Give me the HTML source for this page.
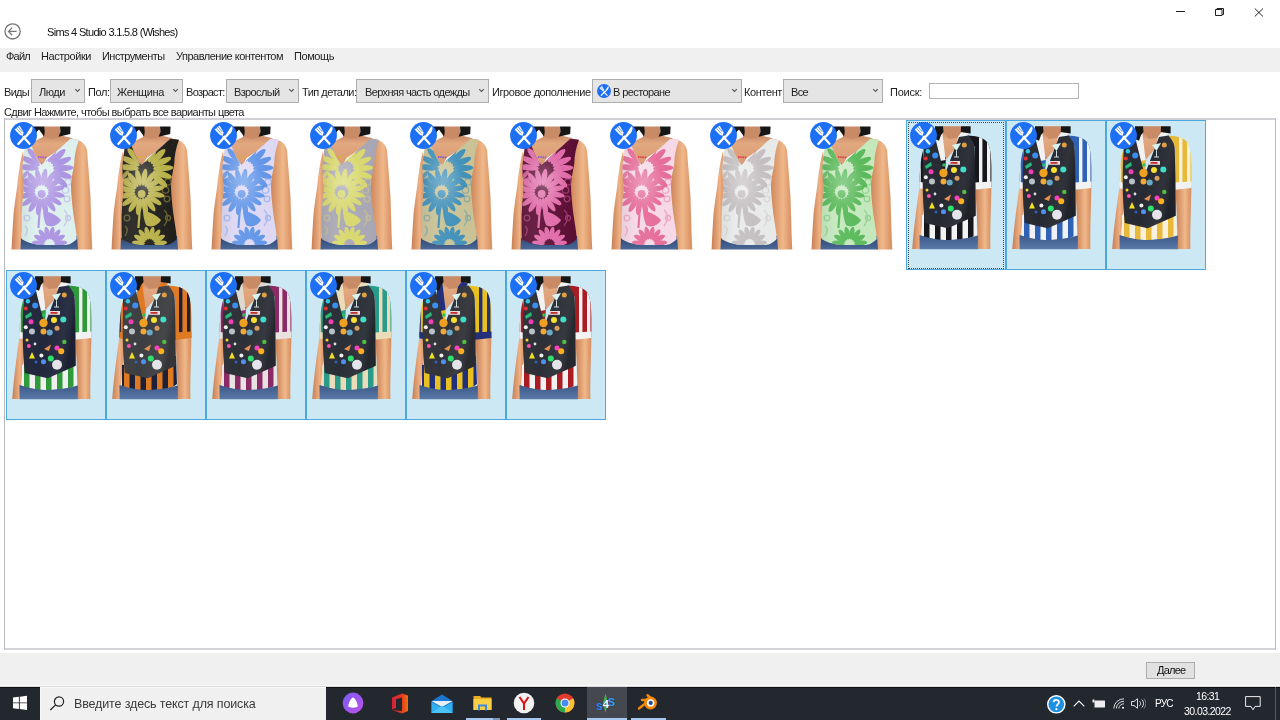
<!DOCTYPE html>
<html><head><meta charset="utf-8"><style>
html,body{margin:0;padding:0;width:1280px;height:720px;overflow:hidden;background:#fff;position:relative;font-family:"Liberation Sans",sans-serif}
.t{position:absolute;white-space:nowrap;line-height:1;will-change:transform;font-family:"Liberation Sans",sans-serif}
.cb{position:absolute;border:1px solid #adadad;background:#e5e5e5}
.chev{position:absolute}
.cell{position:absolute;width:100px;height:150px;box-sizing:border-box}
.cell.sel{background:#cce8f5;border:1px solid #4aa9e0}
.cell .th{position:absolute;left:0;top:0}
.cell.sel .th{left:-1px;top:-1px}
.ic{position:absolute;left:4px;top:2px}
.cell.sel .ic{left:3px;top:1px}
</style></head><body>
<svg width="0" height="0" style="position:absolute"><defs>
<linearGradient id="skL" x1="0" x2="1" y1="0" y2="0"><stop offset="0" stop-color="#c77f55"/><stop offset="0.55" stop-color="#eeb084"/><stop offset="1" stop-color="#d08a5e"/></linearGradient>
<linearGradient id="skR" x1="0" x2="1" y1="0" y2="0"><stop offset="0" stop-color="#c98054"/><stop offset="0.6" stop-color="#f0b88a"/><stop offset="1" stop-color="#d48c5e"/></linearGradient>
<linearGradient id="neck" x1="0" x2="0" y1="0" y2="1"><stop offset="0" stop-color="#b87858"/><stop offset="0.35" stop-color="#e2a880"/><stop offset="1" stop-color="#d89a72"/></linearGradient>
<linearGradient id="shade" x1="0" x2="1" y1="0" y2="0"><stop offset="0" stop-color="#000" stop-opacity="0.18"/><stop offset="0.3" stop-color="#fff" stop-opacity="0.08"/><stop offset="0.7" stop-color="#fff" stop-opacity="0"/><stop offset="1" stop-color="#000" stop-opacity="0.12"/></linearGradient>
<radialGradient id="hl"><stop offset="0" stop-color="#fff" stop-opacity="0.28"/><stop offset="1" stop-color="#fff" stop-opacity="0"/></radialGradient>
<linearGradient id="vsh" x1="0" x2="1" y1="0" y2="0.3"><stop offset="0" stop-color="#fff" stop-opacity="0.04"/><stop offset="0.55" stop-color="#fff" stop-opacity="0.02"/><stop offset="0.85" stop-color="#fff" stop-opacity="0.06"/><stop offset="1" stop-color="#000" stop-opacity="0.1"/></linearGradient>
<linearGradient id="jean" x1="0" x2="0" y1="0" y2="1"><stop offset="0" stop-color="#2c4470"/><stop offset="1" stop-color="#4a6898"/></linearGradient>
<linearGradient id="jean2" x1="0" x2="0" y1="0" y2="1"><stop offset="0" stop-color="#3c5888"/><stop offset="1" stop-color="#5a7aa8"/></linearGradient>
<symbol id="icon" viewBox="0 0 27 27"><circle cx="13.5" cy="13.5" r="13.4" fill="#1d6ff5"/><g fill="#fff"><path d="M8.3 22 L15 14.5" stroke="#fff" stroke-width="2.3" stroke-linecap="round"/><path d="M14.3 15.3 L21.3 4.2 C23.6 4.8 22.5 9.5 20 11.8 L16.6 15.6 Z"/><path d="M13.5 15 L19.5 21.8" stroke="#fff" stroke-width="2.2" stroke-linecap="round"/><path d="M4.6 7.6 L9.6 3.6 L13.6 10.6 L12.6 13.8 L10 13 Z"/></g><path d="M6.5 6.2 L11.2 11.5 M8.2 4.8 L12.2 9.8" stroke="#1d6ff5" stroke-width="0.7"/></symbol></defs></svg>
<svg style="position:absolute;left:4px;top:23px" width="18" height="18" viewBox="0 0 18 18"><circle cx="8.6" cy="8.4" r="7.6" fill="none" stroke="#777" stroke-width="1.3"/><path d="M4.6 8.4 H12.6 M8.2 4.6 L4.6 8.4 L8.2 12.2" fill="none" stroke="#777" stroke-width="1.3"/></svg><div class="t" style="left:47px;top:26.64px;font-size:11px;letter-spacing:-0.68px;color:#111;">Sims 4 Studio 3.1.5.8 (Wishes)</div><div style="position:absolute;left:1176px;top:11px;width:9px;height:1px;background:#222"></div><svg style="position:absolute;left:1214px;top:7px" width="11" height="10" viewBox="0 0 11 10"><path d="M1.5 2.5 H8 V8.5 H1.5 Z M3 2.5 V1.5 H9.5 V7.5 H8" fill="none" stroke="#222" stroke-width="1"/></svg><svg style="position:absolute;left:1254px;top:8px" width="10" height="9" viewBox="0 0 10 9"><path d="M0.8 0.5 L9 8.5 M9 0.5 L0.8 8.5" stroke="#222" stroke-width="1"/></svg><div style="position:absolute;left:0;top:48px;width:1280px;height:24px;background:#f0f0f0"></div><div class="t" style="left:6px;top:50.84px;font-size:11px;letter-spacing:-0.76px;color:#1e1e1e;">Файл</div><div class="t" style="left:41px;top:50.84px;font-size:11px;letter-spacing:-0.44px;color:#1e1e1e;">Настройки</div><div class="t" style="left:102px;top:50.84px;font-size:11px;letter-spacing:-0.55px;color:#1e1e1e;">Инструменты</div><div class="t" style="left:175.5px;top:50.84px;font-size:11px;letter-spacing:-0.5px;color:#1e1e1e;">Управление контентом</div><div class="t" style="left:293.5px;top:50.84px;font-size:11px;letter-spacing:-0.42px;color:#1e1e1e;">Помощь</div><div class="t" style="left:4px;top:86.84px;font-size:11px;letter-spacing:-0.7px;color:#1e1e1e;">Виды</div><div class="cb" style="left:31px;top:79px;width:52px;height:22px"></div><svg class="chev" style="left:74px;top:88px" width="7" height="5" viewBox="0 0 7 5"><path d="M1.2 1.2 L3.5 3.5 L5.8 1.2" stroke="#555" stroke-width="1.1" fill="none"/></svg><div class="t" style="left:39px;top:86.84px;font-size:11px;letter-spacing:-0.45px;color:#1e1e1e;">Люди</div><div class="t" style="left:87.5px;top:86.84px;font-size:11px;letter-spacing:-0.44px;color:#1e1e1e;">Пол:</div><div class="cb" style="left:110px;top:79px;width:71px;height:22px"></div><svg class="chev" style="left:172px;top:88px" width="7" height="5" viewBox="0 0 7 5"><path d="M1.2 1.2 L3.5 3.5 L5.8 1.2" stroke="#555" stroke-width="1.1" fill="none"/></svg><div class="t" style="left:116.5px;top:86.84px;font-size:11px;letter-spacing:-0.37px;color:#1e1e1e;">Женщина</div><div class="t" style="left:185.5px;top:86.84px;font-size:11px;letter-spacing:-0.7px;color:#1e1e1e;">Возраст:</div><div class="cb" style="left:226px;top:79px;width:71px;height:22px"></div><svg class="chev" style="left:288px;top:88px" width="7" height="5" viewBox="0 0 7 5"><path d="M1.2 1.2 L3.5 3.5 L5.8 1.2" stroke="#555" stroke-width="1.1" fill="none"/></svg><div class="t" style="left:234px;top:86.84px;font-size:11px;letter-spacing:-0.64px;color:#1e1e1e;">Взрослый</div><div class="t" style="left:301.5px;top:86.84px;font-size:11px;letter-spacing:-0.52px;color:#1e1e1e;">Тип детали:</div><div class="cb" style="left:356px;top:79px;width:131px;height:22px"></div><svg class="chev" style="left:478px;top:88px" width="7" height="5" viewBox="0 0 7 5"><path d="M1.2 1.2 L3.5 3.5 L5.8 1.2" stroke="#555" stroke-width="1.1" fill="none"/></svg><div class="t" style="left:364.5px;top:86.84px;font-size:11px;letter-spacing:-0.63px;color:#1e1e1e;">Верхняя часть одежды</div><div class="t" style="left:491.5px;top:86.84px;font-size:11px;letter-spacing:-0.44px;color:#1e1e1e;">Игровое дополнение</div><div class="cb" style="left:592px;top:79px;width:148px;height:22px"></div><svg class="chev" style="left:731px;top:88px" width="7" height="5" viewBox="0 0 7 5"><path d="M1.2 1.2 L3.5 3.5 L5.8 1.2" stroke="#555" stroke-width="1.1" fill="none"/></svg><svg style="position:absolute;left:597px;top:84px" width="14" height="14" viewBox="0 0 27 27"><use href="#icon"/></svg><div class="t" style="left:613px;top:86.84px;font-size:11px;letter-spacing:-0.6px;color:#1e1e1e;">В ресторане</div><div class="t" style="left:744px;top:86.84px;font-size:11px;letter-spacing:-0.39px;color:#1e1e1e;">Контент</div><div class="cb" style="left:783px;top:79px;width:98px;height:22px"></div><svg class="chev" style="left:872px;top:88px" width="7" height="5" viewBox="0 0 7 5"><path d="M1.2 1.2 L3.5 3.5 L5.8 1.2" stroke="#555" stroke-width="1.1" fill="none"/></svg><div class="t" style="left:791px;top:86.84px;font-size:11px;letter-spacing:-0.65px;color:#1e1e1e;">Все</div><div class="t" style="left:890px;top:86.84px;font-size:11px;letter-spacing:-0.26px;color:#1e1e1e;">Поиск:</div><div style="position:absolute;left:929px;top:83px;width:148px;height:14px;border:1px solid #b4b4b4;background:#fff"></div><div class="t" style="left:4px;top:106.84px;font-size:11px;letter-spacing:-0.58px;color:#1e1e1e;">Сдвиг Нажмите, чтобы выбрать все варианты цвета</div><div style="position:absolute;left:4px;top:118px;width:1270px;height:528px;border:1px solid #b8b8bc;border-top:2px solid #d2d2d6;border-bottom:2px solid #d4d4d8;background:#fff"></div><div class="cell" style="left:6px;top:120px"><svg class="th" width="100" height="150" viewBox="0 0 100 150">
<defs><clipPath id="c0"><path d="M18.8 27 L25.7 25.9 C28 33 31 40 35.6 45 C45 36 56 26 64.5 18.7 L73 19.8 C70 28 68.3 36 68.3 43.8 C66 55 65 62 65 67.7 C65.5 80 67 90 67.5 95 C69 105 70.5 112 70.7 119 C66 124 62 125 58 125 L34 125 C26 124 20 122 15.6 119 C15.6 110 15.6 100 15.6 95 C16 85 17 75 18 67.7 C17 60 16.4 52 16.4 47 C17 40 18 32 18.8 27 Z"/></clipPath></defs>
<path d="M17 31 C14.5 40 13 50 11.3 65.7 C9.5 78 8.2 88 7.5 94 C6.5 110 6 120 5.6 129.5 L15.5 129.5 C15.5 122 15.5 116 16 110 C18 100 20 90 20 80 C20 60 18 45 17 31 Z" fill="url(#skL)"/>
<path d="M63 18.5 C72 18.5 79 22 81 30 C82 45 83.5 60 84.4 75 C85 90 85.4 112 86.3 129.5 L70 129.5 C69 115 67 100 65 85 C64 70 65 50 63 18.5 Z" fill="url(#skR)"/>
<path d="M38 11 L54 11 L57 16 L66 18 L67 20 L40.7 38 L36 46 L23 27 L26 24 L31 20 L37 17 Z" fill="url(#neck)"/><path d="M37.9 6.6 L54.2 6.6 L54.5 12 L51 17.5 L45 19 L39.5 16.5 L38 12 Z" fill="#c98a66"/>
<path d="M27.3 6.6 L38.2 6.6 L38.8 12 L38 16.5 L33 9.5 L30.5 12 L29 21 L27.3 15 Z" fill="#171717"/><path d="M54 6.6 L64.6 6.6 L64.2 14 L59 15.2 L52.5 16.8 L54.5 12 Z" fill="#171717"/>
<path d="M15 118 L71 116 L72 129.5 L14.5 129.5 Z" fill="url(#jean)"/>
<g clip-path="url(#c0)">
<rect x="0" y="0" width="100" height="150" fill="#dcf0ee"/>
<g fill="#ab93e2" opacity="1.0"><ellipse cx="22.7" cy="47.5" rx="10.1" ry="3.1" transform="rotate(185 22.7 47.5)"/><ellipse cx="24.5" cy="41.3" rx="10.1" ry="3.1" transform="rotate(206 24.5 41.3)"/><ellipse cx="28.4" cy="36.1" rx="10.1" ry="3.1" transform="rotate(228 28.4 36.1)"/><ellipse cx="33.9" cy="32.7" rx="10.1" ry="3.1" transform="rotate(250 33.9 32.7)"/><ellipse cx="40.3" cy="31.6" rx="10.1" ry="3.1" transform="rotate(271 40.3 31.6)"/><ellipse cx="46.6" cy="33.0" rx="10.1" ry="3.1" transform="rotate(292 46.6 33.0)"/><ellipse cx="52.1" cy="36.5" rx="10.1" ry="3.1" transform="rotate(314 52.1 36.5)"/><ellipse cx="55.8" cy="41.8" rx="10.1" ry="3.1" transform="rotate(336 55.8 41.8)"/><ellipse cx="57.3" cy="48.1" rx="10.1" ry="3.1" transform="rotate(357 57.3 48.1)"/><ellipse cx="56.5" cy="54.5" rx="10.1" ry="3.1" transform="rotate(378 56.5 54.5)"/><ellipse cx="53.3" cy="60.2" rx="10.1" ry="3.1" transform="rotate(400 53.3 60.2)"/></g>
<g fill="#ab93e2" opacity="1.0"><ellipse cx="50.3" cy="74.6" rx="8.6" ry="2.8" transform="rotate(10 50.3 74.6)"/><ellipse cx="48.1" cy="80.0" rx="8.6" ry="2.8" transform="rotate(32 48.1 80.0)"/><ellipse cx="44.1" cy="84.2" rx="8.6" ry="2.8" transform="rotate(55 44.1 84.2)"/><ellipse cx="38.8" cy="86.5" rx="8.6" ry="2.8" transform="rotate(78 38.8 86.5)"/><ellipse cx="33.0" cy="86.7" rx="8.6" ry="2.8" transform="rotate(100 33.0 86.7)"/><ellipse cx="27.6" cy="84.5" rx="8.6" ry="2.8" transform="rotate(122 27.6 84.5)"/><ellipse cx="23.4" cy="80.5" rx="8.6" ry="2.8" transform="rotate(145 23.4 80.5)"/><ellipse cx="21.1" cy="75.2" rx="8.6" ry="2.8" transform="rotate(168 21.1 75.2)"/><ellipse cx="20.9" cy="69.4" rx="8.6" ry="2.8" transform="rotate(190 20.9 69.4)"/><ellipse cx="23.1" cy="64.0" rx="8.6" ry="2.8" transform="rotate(212 23.1 64.0)"/><ellipse cx="27.1" cy="59.8" rx="8.6" ry="2.8" transform="rotate(235 27.1 59.8)"/><ellipse cx="32.4" cy="57.5" rx="8.6" ry="2.8" transform="rotate(258 32.4 57.5)"/><ellipse cx="38.2" cy="57.3" rx="8.6" ry="2.8" transform="rotate(280 38.2 57.3)"/><ellipse cx="43.6" cy="59.5" rx="8.6" ry="2.8" transform="rotate(302 43.6 59.5)"/><ellipse cx="47.8" cy="63.5" rx="8.6" ry="2.8" transform="rotate(325 47.8 63.5)"/><ellipse cx="50.1" cy="68.8" rx="8.6" ry="2.8" transform="rotate(348 50.1 68.8)"/></g>
<circle cx="35.6" cy="74" r="4" fill="#ab93e2"/>
<path d="M34 87 L32.4 108" stroke="#ab93e2" stroke-width="2.2"/>
<path d="M37 90 C42 92 50 94 55 100 C52 106 44 108 40 105 C38 100 37 95 37 90Z" fill="#ab93e2"/>
<g fill="#ab93e2" opacity="1.0"><ellipse cx="32.4" cy="123.0" rx="6.5" ry="2.5" transform="rotate(185 32.4 123.0)"/><ellipse cx="33.8" cy="118.5" rx="6.5" ry="2.5" transform="rotate(209 33.8 118.5)"/><ellipse cx="36.9" cy="115.0" rx="6.5" ry="2.5" transform="rotate(234 36.9 115.0)"/><ellipse cx="41.2" cy="113.1" rx="6.5" ry="2.5" transform="rotate(258 41.2 113.1)"/><ellipse cx="45.8" cy="113.1" rx="6.5" ry="2.5" transform="rotate(282 45.8 113.1)"/><ellipse cx="50.1" cy="115.0" rx="6.5" ry="2.5" transform="rotate(306 50.1 115.0)"/><ellipse cx="53.2" cy="118.5" rx="6.5" ry="2.5" transform="rotate(331 53.2 118.5)"/><ellipse cx="54.6" cy="123.0" rx="6.5" ry="2.5" transform="rotate(355 54.6 123.0)"/></g>
<g fill="#ab93e2" opacity="0.85"><ellipse cx="19.0" cy="54.9" rx="5.4" ry="2.0" transform="rotate(-50 19.0 54.9)"/><ellipse cx="21.9" cy="59.3" rx="5.4" ry="2.0" transform="rotate(-17 21.9 59.3)"/><ellipse cx="21.9" cy="64.7" rx="5.4" ry="2.0" transform="rotate(17 21.9 64.7)"/><ellipse cx="19.0" cy="69.1" rx="5.4" ry="2.0" transform="rotate(50 19.0 69.1)"/></g>
<g fill="none" stroke="#ab93e2" stroke-width="1.3" opacity="0.45">
<circle cx="62" cy="62" r="3.2"/><circle cx="59.5" cy="70" r="3.2"/><circle cx="61" cy="79" r="2.8"/><path d="M58 90 C63 94 62 101 58 106"/><circle cx="62" cy="98" r="2.5"/><circle cx="21" cy="98" r="2.8"/><path d="M19 106 C23 109 21 113 19 116"/>
</g>
<rect x="0" y="0" width="100" height="150" fill="url(#shade)"/>
<ellipse cx="38" cy="62" rx="20" ry="30" fill="url(#hl)"/>
</g>
<path d="M32 37 L41 37.5" stroke="#a060e0" stroke-width="1.8" stroke-dasharray="1.6 0.6"/>
</svg><svg class="ic" width="27" height="27" viewBox="0 0 27 27"><use href="#icon"/></svg></div><div class="cell" style="left:106px;top:120px"><svg class="th" width="100" height="150" viewBox="0 0 100 150">
<defs><clipPath id="c1"><path d="M18.8 27 L25.7 25.9 C28 33 31 40 35.6 45 C45 36 56 26 64.5 18.7 L73 19.8 C70 28 68.3 36 68.3 43.8 C66 55 65 62 65 67.7 C65.5 80 67 90 67.5 95 C69 105 70.5 112 70.7 119 C66 124 62 125 58 125 L34 125 C26 124 20 122 15.6 119 C15.6 110 15.6 100 15.6 95 C16 85 17 75 18 67.7 C17 60 16.4 52 16.4 47 C17 40 18 32 18.8 27 Z"/></clipPath></defs>
<path d="M17 31 C14.5 40 13 50 11.3 65.7 C9.5 78 8.2 88 7.5 94 C6.5 110 6 120 5.6 129.5 L15.5 129.5 C15.5 122 15.5 116 16 110 C18 100 20 90 20 80 C20 60 18 45 17 31 Z" fill="url(#skL)"/>
<path d="M63 18.5 C72 18.5 79 22 81 30 C82 45 83.5 60 84.4 75 C85 90 85.4 112 86.3 129.5 L70 129.5 C69 115 67 100 65 85 C64 70 65 50 63 18.5 Z" fill="url(#skR)"/>
<path d="M38 11 L54 11 L57 16 L66 18 L67 20 L40.7 38 L36 46 L23 27 L26 24 L31 20 L37 17 Z" fill="url(#neck)"/><path d="M37.9 6.6 L54.2 6.6 L54.5 12 L51 17.5 L45 19 L39.5 16.5 L38 12 Z" fill="#c98a66"/>
<path d="M27.3 6.6 L38.2 6.6 L38.8 12 L38 16.5 L33 9.5 L30.5 12 L29 21 L27.3 15 Z" fill="#171717"/><path d="M54 6.6 L64.6 6.6 L64.2 14 L59 15.2 L52.5 16.8 L54.5 12 Z" fill="#171717"/>
<path d="M15 118 L71 116 L72 129.5 L14.5 129.5 Z" fill="url(#jean)"/>
<g clip-path="url(#c1)">
<rect x="0" y="0" width="100" height="150" fill="#1f1e1a"/>
<g fill="#b8b048" opacity="1.0"><ellipse cx="22.7" cy="47.5" rx="10.1" ry="3.1" transform="rotate(185 22.7 47.5)"/><ellipse cx="24.5" cy="41.3" rx="10.1" ry="3.1" transform="rotate(206 24.5 41.3)"/><ellipse cx="28.4" cy="36.1" rx="10.1" ry="3.1" transform="rotate(228 28.4 36.1)"/><ellipse cx="33.9" cy="32.7" rx="10.1" ry="3.1" transform="rotate(250 33.9 32.7)"/><ellipse cx="40.3" cy="31.6" rx="10.1" ry="3.1" transform="rotate(271 40.3 31.6)"/><ellipse cx="46.6" cy="33.0" rx="10.1" ry="3.1" transform="rotate(292 46.6 33.0)"/><ellipse cx="52.1" cy="36.5" rx="10.1" ry="3.1" transform="rotate(314 52.1 36.5)"/><ellipse cx="55.8" cy="41.8" rx="10.1" ry="3.1" transform="rotate(336 55.8 41.8)"/><ellipse cx="57.3" cy="48.1" rx="10.1" ry="3.1" transform="rotate(357 57.3 48.1)"/><ellipse cx="56.5" cy="54.5" rx="10.1" ry="3.1" transform="rotate(378 56.5 54.5)"/><ellipse cx="53.3" cy="60.2" rx="10.1" ry="3.1" transform="rotate(400 53.3 60.2)"/></g>
<g fill="#b8b048" opacity="1.0"><ellipse cx="50.3" cy="74.6" rx="8.6" ry="2.8" transform="rotate(10 50.3 74.6)"/><ellipse cx="48.1" cy="80.0" rx="8.6" ry="2.8" transform="rotate(32 48.1 80.0)"/><ellipse cx="44.1" cy="84.2" rx="8.6" ry="2.8" transform="rotate(55 44.1 84.2)"/><ellipse cx="38.8" cy="86.5" rx="8.6" ry="2.8" transform="rotate(78 38.8 86.5)"/><ellipse cx="33.0" cy="86.7" rx="8.6" ry="2.8" transform="rotate(100 33.0 86.7)"/><ellipse cx="27.6" cy="84.5" rx="8.6" ry="2.8" transform="rotate(122 27.6 84.5)"/><ellipse cx="23.4" cy="80.5" rx="8.6" ry="2.8" transform="rotate(145 23.4 80.5)"/><ellipse cx="21.1" cy="75.2" rx="8.6" ry="2.8" transform="rotate(168 21.1 75.2)"/><ellipse cx="20.9" cy="69.4" rx="8.6" ry="2.8" transform="rotate(190 20.9 69.4)"/><ellipse cx="23.1" cy="64.0" rx="8.6" ry="2.8" transform="rotate(212 23.1 64.0)"/><ellipse cx="27.1" cy="59.8" rx="8.6" ry="2.8" transform="rotate(235 27.1 59.8)"/><ellipse cx="32.4" cy="57.5" rx="8.6" ry="2.8" transform="rotate(258 32.4 57.5)"/><ellipse cx="38.2" cy="57.3" rx="8.6" ry="2.8" transform="rotate(280 38.2 57.3)"/><ellipse cx="43.6" cy="59.5" rx="8.6" ry="2.8" transform="rotate(302 43.6 59.5)"/><ellipse cx="47.8" cy="63.5" rx="8.6" ry="2.8" transform="rotate(325 47.8 63.5)"/><ellipse cx="50.1" cy="68.8" rx="8.6" ry="2.8" transform="rotate(348 50.1 68.8)"/></g>
<circle cx="35.6" cy="74" r="4" fill="#b8b048"/>
<path d="M34 87 L32.4 108" stroke="#b8b048" stroke-width="2.2"/>
<path d="M37 90 C42 92 50 94 55 100 C52 106 44 108 40 105 C38 100 37 95 37 90Z" fill="#b8b048"/>
<g fill="#b8b048" opacity="1.0"><ellipse cx="32.4" cy="123.0" rx="6.5" ry="2.5" transform="rotate(185 32.4 123.0)"/><ellipse cx="33.8" cy="118.5" rx="6.5" ry="2.5" transform="rotate(209 33.8 118.5)"/><ellipse cx="36.9" cy="115.0" rx="6.5" ry="2.5" transform="rotate(234 36.9 115.0)"/><ellipse cx="41.2" cy="113.1" rx="6.5" ry="2.5" transform="rotate(258 41.2 113.1)"/><ellipse cx="45.8" cy="113.1" rx="6.5" ry="2.5" transform="rotate(282 45.8 113.1)"/><ellipse cx="50.1" cy="115.0" rx="6.5" ry="2.5" transform="rotate(306 50.1 115.0)"/><ellipse cx="53.2" cy="118.5" rx="6.5" ry="2.5" transform="rotate(331 53.2 118.5)"/><ellipse cx="54.6" cy="123.0" rx="6.5" ry="2.5" transform="rotate(355 54.6 123.0)"/></g>
<g fill="#b8b048" opacity="0.85"><ellipse cx="19.0" cy="54.9" rx="5.4" ry="2.0" transform="rotate(-50 19.0 54.9)"/><ellipse cx="21.9" cy="59.3" rx="5.4" ry="2.0" transform="rotate(-17 21.9 59.3)"/><ellipse cx="21.9" cy="64.7" rx="5.4" ry="2.0" transform="rotate(17 21.9 64.7)"/><ellipse cx="19.0" cy="69.1" rx="5.4" ry="2.0" transform="rotate(50 19.0 69.1)"/></g>
<g fill="none" stroke="#b8b048" stroke-width="1.3" opacity="0.45">
<circle cx="62" cy="62" r="3.2"/><circle cx="59.5" cy="70" r="3.2"/><circle cx="61" cy="79" r="2.8"/><path d="M58 90 C63 94 62 101 58 106"/><circle cx="62" cy="98" r="2.5"/><circle cx="21" cy="98" r="2.8"/><path d="M19 106 C23 109 21 113 19 116"/>
</g>
<rect x="0" y="0" width="100" height="150" fill="url(#shade)"/>
<ellipse cx="38" cy="62" rx="20" ry="30" fill="url(#hl)"/>
</g>
<path d="M32 37 L41 37.5" stroke="#d8b040" stroke-width="1.8" stroke-dasharray="1.6 0.6"/>
</svg><svg class="ic" width="27" height="27" viewBox="0 0 27 27"><use href="#icon"/></svg></div><div class="cell" style="left:206px;top:120px"><svg class="th" width="100" height="150" viewBox="0 0 100 150">
<defs><clipPath id="c2"><path d="M18.8 27 L25.7 25.9 C28 33 31 40 35.6 45 C45 36 56 26 64.5 18.7 L73 19.8 C70 28 68.3 36 68.3 43.8 C66 55 65 62 65 67.7 C65.5 80 67 90 67.5 95 C69 105 70.5 112 70.7 119 C66 124 62 125 58 125 L34 125 C26 124 20 122 15.6 119 C15.6 110 15.6 100 15.6 95 C16 85 17 75 18 67.7 C17 60 16.4 52 16.4 47 C17 40 18 32 18.8 27 Z"/></clipPath></defs>
<path d="M17 31 C14.5 40 13 50 11.3 65.7 C9.5 78 8.2 88 7.5 94 C6.5 110 6 120 5.6 129.5 L15.5 129.5 C15.5 122 15.5 116 16 110 C18 100 20 90 20 80 C20 60 18 45 17 31 Z" fill="url(#skL)"/>
<path d="M63 18.5 C72 18.5 79 22 81 30 C82 45 83.5 60 84.4 75 C85 90 85.4 112 86.3 129.5 L70 129.5 C69 115 67 100 65 85 C64 70 65 50 63 18.5 Z" fill="url(#skR)"/>
<path d="M38 11 L54 11 L57 16 L66 18 L67 20 L40.7 38 L36 46 L23 27 L26 24 L31 20 L37 17 Z" fill="url(#neck)"/><path d="M37.9 6.6 L54.2 6.6 L54.5 12 L51 17.5 L45 19 L39.5 16.5 L38 12 Z" fill="#c98a66"/>
<path d="M27.3 6.6 L38.2 6.6 L38.8 12 L38 16.5 L33 9.5 L30.5 12 L29 21 L27.3 15 Z" fill="#171717"/><path d="M54 6.6 L64.6 6.6 L64.2 14 L59 15.2 L52.5 16.8 L54.5 12 Z" fill="#171717"/>
<path d="M15 118 L71 116 L72 129.5 L14.5 129.5 Z" fill="url(#jean)"/>
<g clip-path="url(#c2)">
<rect x="0" y="0" width="100" height="150" fill="#ddd8f4"/>
<g fill="#5f94e8" opacity="1.0"><ellipse cx="22.7" cy="47.5" rx="10.1" ry="3.1" transform="rotate(185 22.7 47.5)"/><ellipse cx="24.5" cy="41.3" rx="10.1" ry="3.1" transform="rotate(206 24.5 41.3)"/><ellipse cx="28.4" cy="36.1" rx="10.1" ry="3.1" transform="rotate(228 28.4 36.1)"/><ellipse cx="33.9" cy="32.7" rx="10.1" ry="3.1" transform="rotate(250 33.9 32.7)"/><ellipse cx="40.3" cy="31.6" rx="10.1" ry="3.1" transform="rotate(271 40.3 31.6)"/><ellipse cx="46.6" cy="33.0" rx="10.1" ry="3.1" transform="rotate(292 46.6 33.0)"/><ellipse cx="52.1" cy="36.5" rx="10.1" ry="3.1" transform="rotate(314 52.1 36.5)"/><ellipse cx="55.8" cy="41.8" rx="10.1" ry="3.1" transform="rotate(336 55.8 41.8)"/><ellipse cx="57.3" cy="48.1" rx="10.1" ry="3.1" transform="rotate(357 57.3 48.1)"/><ellipse cx="56.5" cy="54.5" rx="10.1" ry="3.1" transform="rotate(378 56.5 54.5)"/><ellipse cx="53.3" cy="60.2" rx="10.1" ry="3.1" transform="rotate(400 53.3 60.2)"/></g>
<g fill="#5f94e8" opacity="1.0"><ellipse cx="50.3" cy="74.6" rx="8.6" ry="2.8" transform="rotate(10 50.3 74.6)"/><ellipse cx="48.1" cy="80.0" rx="8.6" ry="2.8" transform="rotate(32 48.1 80.0)"/><ellipse cx="44.1" cy="84.2" rx="8.6" ry="2.8" transform="rotate(55 44.1 84.2)"/><ellipse cx="38.8" cy="86.5" rx="8.6" ry="2.8" transform="rotate(78 38.8 86.5)"/><ellipse cx="33.0" cy="86.7" rx="8.6" ry="2.8" transform="rotate(100 33.0 86.7)"/><ellipse cx="27.6" cy="84.5" rx="8.6" ry="2.8" transform="rotate(122 27.6 84.5)"/><ellipse cx="23.4" cy="80.5" rx="8.6" ry="2.8" transform="rotate(145 23.4 80.5)"/><ellipse cx="21.1" cy="75.2" rx="8.6" ry="2.8" transform="rotate(168 21.1 75.2)"/><ellipse cx="20.9" cy="69.4" rx="8.6" ry="2.8" transform="rotate(190 20.9 69.4)"/><ellipse cx="23.1" cy="64.0" rx="8.6" ry="2.8" transform="rotate(212 23.1 64.0)"/><ellipse cx="27.1" cy="59.8" rx="8.6" ry="2.8" transform="rotate(235 27.1 59.8)"/><ellipse cx="32.4" cy="57.5" rx="8.6" ry="2.8" transform="rotate(258 32.4 57.5)"/><ellipse cx="38.2" cy="57.3" rx="8.6" ry="2.8" transform="rotate(280 38.2 57.3)"/><ellipse cx="43.6" cy="59.5" rx="8.6" ry="2.8" transform="rotate(302 43.6 59.5)"/><ellipse cx="47.8" cy="63.5" rx="8.6" ry="2.8" transform="rotate(325 47.8 63.5)"/><ellipse cx="50.1" cy="68.8" rx="8.6" ry="2.8" transform="rotate(348 50.1 68.8)"/></g>
<circle cx="35.6" cy="74" r="4" fill="#5f94e8"/>
<path d="M34 87 L32.4 108" stroke="#5f94e8" stroke-width="2.2"/>
<path d="M37 90 C42 92 50 94 55 100 C52 106 44 108 40 105 C38 100 37 95 37 90Z" fill="#5f94e8"/>
<g fill="#5f94e8" opacity="1.0"><ellipse cx="32.4" cy="123.0" rx="6.5" ry="2.5" transform="rotate(185 32.4 123.0)"/><ellipse cx="33.8" cy="118.5" rx="6.5" ry="2.5" transform="rotate(209 33.8 118.5)"/><ellipse cx="36.9" cy="115.0" rx="6.5" ry="2.5" transform="rotate(234 36.9 115.0)"/><ellipse cx="41.2" cy="113.1" rx="6.5" ry="2.5" transform="rotate(258 41.2 113.1)"/><ellipse cx="45.8" cy="113.1" rx="6.5" ry="2.5" transform="rotate(282 45.8 113.1)"/><ellipse cx="50.1" cy="115.0" rx="6.5" ry="2.5" transform="rotate(306 50.1 115.0)"/><ellipse cx="53.2" cy="118.5" rx="6.5" ry="2.5" transform="rotate(331 53.2 118.5)"/><ellipse cx="54.6" cy="123.0" rx="6.5" ry="2.5" transform="rotate(355 54.6 123.0)"/></g>
<g fill="#5f94e8" opacity="0.85"><ellipse cx="19.0" cy="54.9" rx="5.4" ry="2.0" transform="rotate(-50 19.0 54.9)"/><ellipse cx="21.9" cy="59.3" rx="5.4" ry="2.0" transform="rotate(-17 21.9 59.3)"/><ellipse cx="21.9" cy="64.7" rx="5.4" ry="2.0" transform="rotate(17 21.9 64.7)"/><ellipse cx="19.0" cy="69.1" rx="5.4" ry="2.0" transform="rotate(50 19.0 69.1)"/></g>
<g fill="none" stroke="#5f94e8" stroke-width="1.3" opacity="0.45">
<circle cx="62" cy="62" r="3.2"/><circle cx="59.5" cy="70" r="3.2"/><circle cx="61" cy="79" r="2.8"/><path d="M58 90 C63 94 62 101 58 106"/><circle cx="62" cy="98" r="2.5"/><circle cx="21" cy="98" r="2.8"/><path d="M19 106 C23 109 21 113 19 116"/>
</g>
<rect x="0" y="0" width="100" height="150" fill="url(#shade)"/>
<ellipse cx="38" cy="62" rx="20" ry="30" fill="url(#hl)"/>
</g>
<path d="M32 37 L41 37.5" stroke="#d8b040" stroke-width="1.8" stroke-dasharray="1.6 0.6"/>
</svg><svg class="ic" width="27" height="27" viewBox="0 0 27 27"><use href="#icon"/></svg></div><div class="cell" style="left:306px;top:120px"><svg class="th" width="100" height="150" viewBox="0 0 100 150">
<defs><clipPath id="c3"><path d="M18.8 27 L25.7 25.9 C28 33 31 40 35.6 45 C45 36 56 26 64.5 18.7 L73 19.8 C70 28 68.3 36 68.3 43.8 C66 55 65 62 65 67.7 C65.5 80 67 90 67.5 95 C69 105 70.5 112 70.7 119 C66 124 62 125 58 125 L34 125 C26 124 20 122 15.6 119 C15.6 110 15.6 100 15.6 95 C16 85 17 75 18 67.7 C17 60 16.4 52 16.4 47 C17 40 18 32 18.8 27 Z"/></clipPath></defs>
<path d="M17 31 C14.5 40 13 50 11.3 65.7 C9.5 78 8.2 88 7.5 94 C6.5 110 6 120 5.6 129.5 L15.5 129.5 C15.5 122 15.5 116 16 110 C18 100 20 90 20 80 C20 60 18 45 17 31 Z" fill="url(#skL)"/>
<path d="M63 18.5 C72 18.5 79 22 81 30 C82 45 83.5 60 84.4 75 C85 90 85.4 112 86.3 129.5 L70 129.5 C69 115 67 100 65 85 C64 70 65 50 63 18.5 Z" fill="url(#skR)"/>
<path d="M38 11 L54 11 L57 16 L66 18 L67 20 L40.7 38 L36 46 L23 27 L26 24 L31 20 L37 17 Z" fill="url(#neck)"/><path d="M37.9 6.6 L54.2 6.6 L54.5 12 L51 17.5 L45 19 L39.5 16.5 L38 12 Z" fill="#c98a66"/>
<path d="M27.3 6.6 L38.2 6.6 L38.8 12 L38 16.5 L33 9.5 L30.5 12 L29 21 L27.3 15 Z" fill="#171717"/><path d="M54 6.6 L64.6 6.6 L64.2 14 L59 15.2 L52.5 16.8 L54.5 12 Z" fill="#171717"/>
<path d="M15 118 L71 116 L72 129.5 L14.5 129.5 Z" fill="url(#jean)"/>
<g clip-path="url(#c3)">
<rect x="0" y="0" width="100" height="150" fill="#a8a6b4"/>
<g fill="#d8d86c" opacity="1.0"><ellipse cx="22.7" cy="47.5" rx="10.1" ry="3.1" transform="rotate(185 22.7 47.5)"/><ellipse cx="24.5" cy="41.3" rx="10.1" ry="3.1" transform="rotate(206 24.5 41.3)"/><ellipse cx="28.4" cy="36.1" rx="10.1" ry="3.1" transform="rotate(228 28.4 36.1)"/><ellipse cx="33.9" cy="32.7" rx="10.1" ry="3.1" transform="rotate(250 33.9 32.7)"/><ellipse cx="40.3" cy="31.6" rx="10.1" ry="3.1" transform="rotate(271 40.3 31.6)"/><ellipse cx="46.6" cy="33.0" rx="10.1" ry="3.1" transform="rotate(292 46.6 33.0)"/><ellipse cx="52.1" cy="36.5" rx="10.1" ry="3.1" transform="rotate(314 52.1 36.5)"/><ellipse cx="55.8" cy="41.8" rx="10.1" ry="3.1" transform="rotate(336 55.8 41.8)"/><ellipse cx="57.3" cy="48.1" rx="10.1" ry="3.1" transform="rotate(357 57.3 48.1)"/><ellipse cx="56.5" cy="54.5" rx="10.1" ry="3.1" transform="rotate(378 56.5 54.5)"/><ellipse cx="53.3" cy="60.2" rx="10.1" ry="3.1" transform="rotate(400 53.3 60.2)"/></g>
<g fill="#d8d86c" opacity="1.0"><ellipse cx="50.3" cy="74.6" rx="8.6" ry="2.8" transform="rotate(10 50.3 74.6)"/><ellipse cx="48.1" cy="80.0" rx="8.6" ry="2.8" transform="rotate(32 48.1 80.0)"/><ellipse cx="44.1" cy="84.2" rx="8.6" ry="2.8" transform="rotate(55 44.1 84.2)"/><ellipse cx="38.8" cy="86.5" rx="8.6" ry="2.8" transform="rotate(78 38.8 86.5)"/><ellipse cx="33.0" cy="86.7" rx="8.6" ry="2.8" transform="rotate(100 33.0 86.7)"/><ellipse cx="27.6" cy="84.5" rx="8.6" ry="2.8" transform="rotate(122 27.6 84.5)"/><ellipse cx="23.4" cy="80.5" rx="8.6" ry="2.8" transform="rotate(145 23.4 80.5)"/><ellipse cx="21.1" cy="75.2" rx="8.6" ry="2.8" transform="rotate(168 21.1 75.2)"/><ellipse cx="20.9" cy="69.4" rx="8.6" ry="2.8" transform="rotate(190 20.9 69.4)"/><ellipse cx="23.1" cy="64.0" rx="8.6" ry="2.8" transform="rotate(212 23.1 64.0)"/><ellipse cx="27.1" cy="59.8" rx="8.6" ry="2.8" transform="rotate(235 27.1 59.8)"/><ellipse cx="32.4" cy="57.5" rx="8.6" ry="2.8" transform="rotate(258 32.4 57.5)"/><ellipse cx="38.2" cy="57.3" rx="8.6" ry="2.8" transform="rotate(280 38.2 57.3)"/><ellipse cx="43.6" cy="59.5" rx="8.6" ry="2.8" transform="rotate(302 43.6 59.5)"/><ellipse cx="47.8" cy="63.5" rx="8.6" ry="2.8" transform="rotate(325 47.8 63.5)"/><ellipse cx="50.1" cy="68.8" rx="8.6" ry="2.8" transform="rotate(348 50.1 68.8)"/></g>
<circle cx="35.6" cy="74" r="4" fill="#d8d86c"/>
<path d="M34 87 L32.4 108" stroke="#d8d86c" stroke-width="2.2"/>
<path d="M37 90 C42 92 50 94 55 100 C52 106 44 108 40 105 C38 100 37 95 37 90Z" fill="#d8d86c"/>
<g fill="#d8d86c" opacity="1.0"><ellipse cx="32.4" cy="123.0" rx="6.5" ry="2.5" transform="rotate(185 32.4 123.0)"/><ellipse cx="33.8" cy="118.5" rx="6.5" ry="2.5" transform="rotate(209 33.8 118.5)"/><ellipse cx="36.9" cy="115.0" rx="6.5" ry="2.5" transform="rotate(234 36.9 115.0)"/><ellipse cx="41.2" cy="113.1" rx="6.5" ry="2.5" transform="rotate(258 41.2 113.1)"/><ellipse cx="45.8" cy="113.1" rx="6.5" ry="2.5" transform="rotate(282 45.8 113.1)"/><ellipse cx="50.1" cy="115.0" rx="6.5" ry="2.5" transform="rotate(306 50.1 115.0)"/><ellipse cx="53.2" cy="118.5" rx="6.5" ry="2.5" transform="rotate(331 53.2 118.5)"/><ellipse cx="54.6" cy="123.0" rx="6.5" ry="2.5" transform="rotate(355 54.6 123.0)"/></g>
<g fill="#d8d86c" opacity="0.85"><ellipse cx="19.0" cy="54.9" rx="5.4" ry="2.0" transform="rotate(-50 19.0 54.9)"/><ellipse cx="21.9" cy="59.3" rx="5.4" ry="2.0" transform="rotate(-17 21.9 59.3)"/><ellipse cx="21.9" cy="64.7" rx="5.4" ry="2.0" transform="rotate(17 21.9 64.7)"/><ellipse cx="19.0" cy="69.1" rx="5.4" ry="2.0" transform="rotate(50 19.0 69.1)"/></g>
<g fill="none" stroke="#d8d86c" stroke-width="1.3" opacity="0.45">
<circle cx="62" cy="62" r="3.2"/><circle cx="59.5" cy="70" r="3.2"/><circle cx="61" cy="79" r="2.8"/><path d="M58 90 C63 94 62 101 58 106"/><circle cx="62" cy="98" r="2.5"/><circle cx="21" cy="98" r="2.8"/><path d="M19 106 C23 109 21 113 19 116"/>
</g>
<rect x="0" y="0" width="100" height="150" fill="url(#shade)"/>
<ellipse cx="38" cy="62" rx="20" ry="30" fill="url(#hl)"/>
</g>
<path d="M32 37 L41 37.5" stroke="#d8b040" stroke-width="1.8" stroke-dasharray="1.6 0.6"/>
</svg><svg class="ic" width="27" height="27" viewBox="0 0 27 27"><use href="#icon"/></svg></div><div class="cell" style="left:406px;top:120px"><svg class="th" width="100" height="150" viewBox="0 0 100 150">
<defs><clipPath id="c4"><path d="M18.8 27 L25.7 25.9 C28 33 31 40 35.6 45 C45 36 56 26 64.5 18.7 L73 19.8 C70 28 68.3 36 68.3 43.8 C66 55 65 62 65 67.7 C65.5 80 67 90 67.5 95 C69 105 70.5 112 70.7 119 C66 124 62 125 58 125 L34 125 C26 124 20 122 15.6 119 C15.6 110 15.6 100 15.6 95 C16 85 17 75 18 67.7 C17 60 16.4 52 16.4 47 C17 40 18 32 18.8 27 Z"/></clipPath></defs>
<path d="M17 31 C14.5 40 13 50 11.3 65.7 C9.5 78 8.2 88 7.5 94 C6.5 110 6 120 5.6 129.5 L15.5 129.5 C15.5 122 15.5 116 16 110 C18 100 20 90 20 80 C20 60 18 45 17 31 Z" fill="url(#skL)"/>
<path d="M63 18.5 C72 18.5 79 22 81 30 C82 45 83.5 60 84.4 75 C85 90 85.4 112 86.3 129.5 L70 129.5 C69 115 67 100 65 85 C64 70 65 50 63 18.5 Z" fill="url(#skR)"/>
<path d="M38 11 L54 11 L57 16 L66 18 L67 20 L40.7 38 L36 46 L23 27 L26 24 L31 20 L37 17 Z" fill="url(#neck)"/><path d="M37.9 6.6 L54.2 6.6 L54.5 12 L51 17.5 L45 19 L39.5 16.5 L38 12 Z" fill="#c98a66"/>
<path d="M27.3 6.6 L38.2 6.6 L38.8 12 L38 16.5 L33 9.5 L30.5 12 L29 21 L27.3 15 Z" fill="#171717"/><path d="M54 6.6 L64.6 6.6 L64.2 14 L59 15.2 L52.5 16.8 L54.5 12 Z" fill="#171717"/>
<path d="M15 118 L71 116 L72 129.5 L14.5 129.5 Z" fill="url(#jean)"/>
<g clip-path="url(#c4)">
<rect x="0" y="0" width="100" height="150" fill="#c9c294"/>
<g fill="#3f8fb8" opacity="1.0"><ellipse cx="22.7" cy="47.5" rx="10.1" ry="3.1" transform="rotate(185 22.7 47.5)"/><ellipse cx="24.5" cy="41.3" rx="10.1" ry="3.1" transform="rotate(206 24.5 41.3)"/><ellipse cx="28.4" cy="36.1" rx="10.1" ry="3.1" transform="rotate(228 28.4 36.1)"/><ellipse cx="33.9" cy="32.7" rx="10.1" ry="3.1" transform="rotate(250 33.9 32.7)"/><ellipse cx="40.3" cy="31.6" rx="10.1" ry="3.1" transform="rotate(271 40.3 31.6)"/><ellipse cx="46.6" cy="33.0" rx="10.1" ry="3.1" transform="rotate(292 46.6 33.0)"/><ellipse cx="52.1" cy="36.5" rx="10.1" ry="3.1" transform="rotate(314 52.1 36.5)"/><ellipse cx="55.8" cy="41.8" rx="10.1" ry="3.1" transform="rotate(336 55.8 41.8)"/><ellipse cx="57.3" cy="48.1" rx="10.1" ry="3.1" transform="rotate(357 57.3 48.1)"/><ellipse cx="56.5" cy="54.5" rx="10.1" ry="3.1" transform="rotate(378 56.5 54.5)"/><ellipse cx="53.3" cy="60.2" rx="10.1" ry="3.1" transform="rotate(400 53.3 60.2)"/></g>
<g fill="#3f8fb8" opacity="1.0"><ellipse cx="50.3" cy="74.6" rx="8.6" ry="2.8" transform="rotate(10 50.3 74.6)"/><ellipse cx="48.1" cy="80.0" rx="8.6" ry="2.8" transform="rotate(32 48.1 80.0)"/><ellipse cx="44.1" cy="84.2" rx="8.6" ry="2.8" transform="rotate(55 44.1 84.2)"/><ellipse cx="38.8" cy="86.5" rx="8.6" ry="2.8" transform="rotate(78 38.8 86.5)"/><ellipse cx="33.0" cy="86.7" rx="8.6" ry="2.8" transform="rotate(100 33.0 86.7)"/><ellipse cx="27.6" cy="84.5" rx="8.6" ry="2.8" transform="rotate(122 27.6 84.5)"/><ellipse cx="23.4" cy="80.5" rx="8.6" ry="2.8" transform="rotate(145 23.4 80.5)"/><ellipse cx="21.1" cy="75.2" rx="8.6" ry="2.8" transform="rotate(168 21.1 75.2)"/><ellipse cx="20.9" cy="69.4" rx="8.6" ry="2.8" transform="rotate(190 20.9 69.4)"/><ellipse cx="23.1" cy="64.0" rx="8.6" ry="2.8" transform="rotate(212 23.1 64.0)"/><ellipse cx="27.1" cy="59.8" rx="8.6" ry="2.8" transform="rotate(235 27.1 59.8)"/><ellipse cx="32.4" cy="57.5" rx="8.6" ry="2.8" transform="rotate(258 32.4 57.5)"/><ellipse cx="38.2" cy="57.3" rx="8.6" ry="2.8" transform="rotate(280 38.2 57.3)"/><ellipse cx="43.6" cy="59.5" rx="8.6" ry="2.8" transform="rotate(302 43.6 59.5)"/><ellipse cx="47.8" cy="63.5" rx="8.6" ry="2.8" transform="rotate(325 47.8 63.5)"/><ellipse cx="50.1" cy="68.8" rx="8.6" ry="2.8" transform="rotate(348 50.1 68.8)"/></g>
<circle cx="35.6" cy="74" r="4" fill="#3f8fb8"/>
<path d="M34 87 L32.4 108" stroke="#3f8fb8" stroke-width="2.2"/>
<path d="M37 90 C42 92 50 94 55 100 C52 106 44 108 40 105 C38 100 37 95 37 90Z" fill="#3f8fb8"/>
<g fill="#3f8fb8" opacity="1.0"><ellipse cx="32.4" cy="123.0" rx="6.5" ry="2.5" transform="rotate(185 32.4 123.0)"/><ellipse cx="33.8" cy="118.5" rx="6.5" ry="2.5" transform="rotate(209 33.8 118.5)"/><ellipse cx="36.9" cy="115.0" rx="6.5" ry="2.5" transform="rotate(234 36.9 115.0)"/><ellipse cx="41.2" cy="113.1" rx="6.5" ry="2.5" transform="rotate(258 41.2 113.1)"/><ellipse cx="45.8" cy="113.1" rx="6.5" ry="2.5" transform="rotate(282 45.8 113.1)"/><ellipse cx="50.1" cy="115.0" rx="6.5" ry="2.5" transform="rotate(306 50.1 115.0)"/><ellipse cx="53.2" cy="118.5" rx="6.5" ry="2.5" transform="rotate(331 53.2 118.5)"/><ellipse cx="54.6" cy="123.0" rx="6.5" ry="2.5" transform="rotate(355 54.6 123.0)"/></g>
<g fill="#3f8fb8" opacity="0.85"><ellipse cx="19.0" cy="54.9" rx="5.4" ry="2.0" transform="rotate(-50 19.0 54.9)"/><ellipse cx="21.9" cy="59.3" rx="5.4" ry="2.0" transform="rotate(-17 21.9 59.3)"/><ellipse cx="21.9" cy="64.7" rx="5.4" ry="2.0" transform="rotate(17 21.9 64.7)"/><ellipse cx="19.0" cy="69.1" rx="5.4" ry="2.0" transform="rotate(50 19.0 69.1)"/></g>
<g fill="none" stroke="#3f8fb8" stroke-width="1.3" opacity="0.45">
<circle cx="62" cy="62" r="3.2"/><circle cx="59.5" cy="70" r="3.2"/><circle cx="61" cy="79" r="2.8"/><path d="M58 90 C63 94 62 101 58 106"/><circle cx="62" cy="98" r="2.5"/><circle cx="21" cy="98" r="2.8"/><path d="M19 106 C23 109 21 113 19 116"/>
</g>
<rect x="0" y="0" width="100" height="150" fill="url(#shade)"/>
<ellipse cx="38" cy="62" rx="20" ry="30" fill="url(#hl)"/>
</g>
<path d="M32 37 L41 37.5" stroke="#8060d0" stroke-width="1.8" stroke-dasharray="1.6 0.6"/>
</svg><svg class="ic" width="27" height="27" viewBox="0 0 27 27"><use href="#icon"/></svg></div><div class="cell" style="left:506px;top:120px"><svg class="th" width="100" height="150" viewBox="0 0 100 150">
<defs><clipPath id="c5"><path d="M18.8 27 L25.7 25.9 C28 33 31 40 35.6 45 C45 36 56 26 64.5 18.7 L73 19.8 C70 28 68.3 36 68.3 43.8 C66 55 65 62 65 67.7 C65.5 80 67 90 67.5 95 C69 105 70.5 112 70.7 119 C66 124 62 125 58 125 L34 125 C26 124 20 122 15.6 119 C15.6 110 15.6 100 15.6 95 C16 85 17 75 18 67.7 C17 60 16.4 52 16.4 47 C17 40 18 32 18.8 27 Z"/></clipPath></defs>
<path d="M17 31 C14.5 40 13 50 11.3 65.7 C9.5 78 8.2 88 7.5 94 C6.5 110 6 120 5.6 129.5 L15.5 129.5 C15.5 122 15.5 116 16 110 C18 100 20 90 20 80 C20 60 18 45 17 31 Z" fill="url(#skL)"/>
<path d="M63 18.5 C72 18.5 79 22 81 30 C82 45 83.5 60 84.4 75 C85 90 85.4 112 86.3 129.5 L70 129.5 C69 115 67 100 65 85 C64 70 65 50 63 18.5 Z" fill="url(#skR)"/>
<path d="M38 11 L54 11 L57 16 L66 18 L67 20 L40.7 38 L36 46 L23 27 L26 24 L31 20 L37 17 Z" fill="url(#neck)"/><path d="M37.9 6.6 L54.2 6.6 L54.5 12 L51 17.5 L45 19 L39.5 16.5 L38 12 Z" fill="#c98a66"/>
<path d="M27.3 6.6 L38.2 6.6 L38.8 12 L38 16.5 L33 9.5 L30.5 12 L29 21 L27.3 15 Z" fill="#171717"/><path d="M54 6.6 L64.6 6.6 L64.2 14 L59 15.2 L52.5 16.8 L54.5 12 Z" fill="#171717"/>
<path d="M15 118 L71 116 L72 129.5 L14.5 129.5 Z" fill="url(#jean)"/>
<g clip-path="url(#c5)">
<rect x="0" y="0" width="100" height="150" fill="#5c0d34"/>
<g fill="#e06aa8" opacity="1.0"><ellipse cx="22.7" cy="47.5" rx="10.1" ry="3.1" transform="rotate(185 22.7 47.5)"/><ellipse cx="24.5" cy="41.3" rx="10.1" ry="3.1" transform="rotate(206 24.5 41.3)"/><ellipse cx="28.4" cy="36.1" rx="10.1" ry="3.1" transform="rotate(228 28.4 36.1)"/><ellipse cx="33.9" cy="32.7" rx="10.1" ry="3.1" transform="rotate(250 33.9 32.7)"/><ellipse cx="40.3" cy="31.6" rx="10.1" ry="3.1" transform="rotate(271 40.3 31.6)"/><ellipse cx="46.6" cy="33.0" rx="10.1" ry="3.1" transform="rotate(292 46.6 33.0)"/><ellipse cx="52.1" cy="36.5" rx="10.1" ry="3.1" transform="rotate(314 52.1 36.5)"/><ellipse cx="55.8" cy="41.8" rx="10.1" ry="3.1" transform="rotate(336 55.8 41.8)"/><ellipse cx="57.3" cy="48.1" rx="10.1" ry="3.1" transform="rotate(357 57.3 48.1)"/><ellipse cx="56.5" cy="54.5" rx="10.1" ry="3.1" transform="rotate(378 56.5 54.5)"/><ellipse cx="53.3" cy="60.2" rx="10.1" ry="3.1" transform="rotate(400 53.3 60.2)"/></g>
<g fill="#e06aa8" opacity="1.0"><ellipse cx="50.3" cy="74.6" rx="8.6" ry="2.8" transform="rotate(10 50.3 74.6)"/><ellipse cx="48.1" cy="80.0" rx="8.6" ry="2.8" transform="rotate(32 48.1 80.0)"/><ellipse cx="44.1" cy="84.2" rx="8.6" ry="2.8" transform="rotate(55 44.1 84.2)"/><ellipse cx="38.8" cy="86.5" rx="8.6" ry="2.8" transform="rotate(78 38.8 86.5)"/><ellipse cx="33.0" cy="86.7" rx="8.6" ry="2.8" transform="rotate(100 33.0 86.7)"/><ellipse cx="27.6" cy="84.5" rx="8.6" ry="2.8" transform="rotate(122 27.6 84.5)"/><ellipse cx="23.4" cy="80.5" rx="8.6" ry="2.8" transform="rotate(145 23.4 80.5)"/><ellipse cx="21.1" cy="75.2" rx="8.6" ry="2.8" transform="rotate(168 21.1 75.2)"/><ellipse cx="20.9" cy="69.4" rx="8.6" ry="2.8" transform="rotate(190 20.9 69.4)"/><ellipse cx="23.1" cy="64.0" rx="8.6" ry="2.8" transform="rotate(212 23.1 64.0)"/><ellipse cx="27.1" cy="59.8" rx="8.6" ry="2.8" transform="rotate(235 27.1 59.8)"/><ellipse cx="32.4" cy="57.5" rx="8.6" ry="2.8" transform="rotate(258 32.4 57.5)"/><ellipse cx="38.2" cy="57.3" rx="8.6" ry="2.8" transform="rotate(280 38.2 57.3)"/><ellipse cx="43.6" cy="59.5" rx="8.6" ry="2.8" transform="rotate(302 43.6 59.5)"/><ellipse cx="47.8" cy="63.5" rx="8.6" ry="2.8" transform="rotate(325 47.8 63.5)"/><ellipse cx="50.1" cy="68.8" rx="8.6" ry="2.8" transform="rotate(348 50.1 68.8)"/></g>
<circle cx="35.6" cy="74" r="4" fill="#e06aa8"/>
<path d="M34 87 L32.4 108" stroke="#e06aa8" stroke-width="2.2"/>
<path d="M37 90 C42 92 50 94 55 100 C52 106 44 108 40 105 C38 100 37 95 37 90Z" fill="#e06aa8"/>
<g fill="#e06aa8" opacity="1.0"><ellipse cx="32.4" cy="123.0" rx="6.5" ry="2.5" transform="rotate(185 32.4 123.0)"/><ellipse cx="33.8" cy="118.5" rx="6.5" ry="2.5" transform="rotate(209 33.8 118.5)"/><ellipse cx="36.9" cy="115.0" rx="6.5" ry="2.5" transform="rotate(234 36.9 115.0)"/><ellipse cx="41.2" cy="113.1" rx="6.5" ry="2.5" transform="rotate(258 41.2 113.1)"/><ellipse cx="45.8" cy="113.1" rx="6.5" ry="2.5" transform="rotate(282 45.8 113.1)"/><ellipse cx="50.1" cy="115.0" rx="6.5" ry="2.5" transform="rotate(306 50.1 115.0)"/><ellipse cx="53.2" cy="118.5" rx="6.5" ry="2.5" transform="rotate(331 53.2 118.5)"/><ellipse cx="54.6" cy="123.0" rx="6.5" ry="2.5" transform="rotate(355 54.6 123.0)"/></g>
<g fill="#e06aa8" opacity="0.85"><ellipse cx="19.0" cy="54.9" rx="5.4" ry="2.0" transform="rotate(-50 19.0 54.9)"/><ellipse cx="21.9" cy="59.3" rx="5.4" ry="2.0" transform="rotate(-17 21.9 59.3)"/><ellipse cx="21.9" cy="64.7" rx="5.4" ry="2.0" transform="rotate(17 21.9 64.7)"/><ellipse cx="19.0" cy="69.1" rx="5.4" ry="2.0" transform="rotate(50 19.0 69.1)"/></g>
<g fill="none" stroke="#e06aa8" stroke-width="1.3" opacity="0.45">
<circle cx="62" cy="62" r="3.2"/><circle cx="59.5" cy="70" r="3.2"/><circle cx="61" cy="79" r="2.8"/><path d="M58 90 C63 94 62 101 58 106"/><circle cx="62" cy="98" r="2.5"/><circle cx="21" cy="98" r="2.8"/><path d="M19 106 C23 109 21 113 19 116"/>
</g>
<rect x="0" y="0" width="100" height="150" fill="url(#shade)"/>
<ellipse cx="38" cy="62" rx="20" ry="30" fill="url(#hl)"/>
</g>
<path d="M32 37 L41 37.5" stroke="#9060d0" stroke-width="1.8" stroke-dasharray="1.6 0.6"/>
</svg><svg class="ic" width="27" height="27" viewBox="0 0 27 27"><use href="#icon"/></svg></div><div class="cell" style="left:606px;top:120px"><svg class="th" width="100" height="150" viewBox="0 0 100 150">
<defs><clipPath id="c6"><path d="M18.8 27 L25.7 25.9 C28 33 31 40 35.6 45 C45 36 56 26 64.5 18.7 L73 19.8 C70 28 68.3 36 68.3 43.8 C66 55 65 62 65 67.7 C65.5 80 67 90 67.5 95 C69 105 70.5 112 70.7 119 C66 124 62 125 58 125 L34 125 C26 124 20 122 15.6 119 C15.6 110 15.6 100 15.6 95 C16 85 17 75 18 67.7 C17 60 16.4 52 16.4 47 C17 40 18 32 18.8 27 Z"/></clipPath></defs>
<path d="M17 31 C14.5 40 13 50 11.3 65.7 C9.5 78 8.2 88 7.5 94 C6.5 110 6 120 5.6 129.5 L15.5 129.5 C15.5 122 15.5 116 16 110 C18 100 20 90 20 80 C20 60 18 45 17 31 Z" fill="url(#skL)"/>
<path d="M63 18.5 C72 18.5 79 22 81 30 C82 45 83.5 60 84.4 75 C85 90 85.4 112 86.3 129.5 L70 129.5 C69 115 67 100 65 85 C64 70 65 50 63 18.5 Z" fill="url(#skR)"/>
<path d="M38 11 L54 11 L57 16 L66 18 L67 20 L40.7 38 L36 46 L23 27 L26 24 L31 20 L37 17 Z" fill="url(#neck)"/><path d="M37.9 6.6 L54.2 6.6 L54.5 12 L51 17.5 L45 19 L39.5 16.5 L38 12 Z" fill="#c98a66"/>
<path d="M27.3 6.6 L38.2 6.6 L38.8 12 L38 16.5 L33 9.5 L30.5 12 L29 21 L27.3 15 Z" fill="#171717"/><path d="M54 6.6 L64.6 6.6 L64.2 14 L59 15.2 L52.5 16.8 L54.5 12 Z" fill="#171717"/>
<path d="M15 118 L71 116 L72 129.5 L14.5 129.5 Z" fill="url(#jean)"/>
<g clip-path="url(#c6)">
<rect x="0" y="0" width="100" height="150" fill="#f6d8e6"/>
<g fill="#e56a98" opacity="1.0"><ellipse cx="22.7" cy="47.5" rx="10.1" ry="3.1" transform="rotate(185 22.7 47.5)"/><ellipse cx="24.5" cy="41.3" rx="10.1" ry="3.1" transform="rotate(206 24.5 41.3)"/><ellipse cx="28.4" cy="36.1" rx="10.1" ry="3.1" transform="rotate(228 28.4 36.1)"/><ellipse cx="33.9" cy="32.7" rx="10.1" ry="3.1" transform="rotate(250 33.9 32.7)"/><ellipse cx="40.3" cy="31.6" rx="10.1" ry="3.1" transform="rotate(271 40.3 31.6)"/><ellipse cx="46.6" cy="33.0" rx="10.1" ry="3.1" transform="rotate(292 46.6 33.0)"/><ellipse cx="52.1" cy="36.5" rx="10.1" ry="3.1" transform="rotate(314 52.1 36.5)"/><ellipse cx="55.8" cy="41.8" rx="10.1" ry="3.1" transform="rotate(336 55.8 41.8)"/><ellipse cx="57.3" cy="48.1" rx="10.1" ry="3.1" transform="rotate(357 57.3 48.1)"/><ellipse cx="56.5" cy="54.5" rx="10.1" ry="3.1" transform="rotate(378 56.5 54.5)"/><ellipse cx="53.3" cy="60.2" rx="10.1" ry="3.1" transform="rotate(400 53.3 60.2)"/></g>
<g fill="#e56a98" opacity="1.0"><ellipse cx="50.3" cy="74.6" rx="8.6" ry="2.8" transform="rotate(10 50.3 74.6)"/><ellipse cx="48.1" cy="80.0" rx="8.6" ry="2.8" transform="rotate(32 48.1 80.0)"/><ellipse cx="44.1" cy="84.2" rx="8.6" ry="2.8" transform="rotate(55 44.1 84.2)"/><ellipse cx="38.8" cy="86.5" rx="8.6" ry="2.8" transform="rotate(78 38.8 86.5)"/><ellipse cx="33.0" cy="86.7" rx="8.6" ry="2.8" transform="rotate(100 33.0 86.7)"/><ellipse cx="27.6" cy="84.5" rx="8.6" ry="2.8" transform="rotate(122 27.6 84.5)"/><ellipse cx="23.4" cy="80.5" rx="8.6" ry="2.8" transform="rotate(145 23.4 80.5)"/><ellipse cx="21.1" cy="75.2" rx="8.6" ry="2.8" transform="rotate(168 21.1 75.2)"/><ellipse cx="20.9" cy="69.4" rx="8.6" ry="2.8" transform="rotate(190 20.9 69.4)"/><ellipse cx="23.1" cy="64.0" rx="8.6" ry="2.8" transform="rotate(212 23.1 64.0)"/><ellipse cx="27.1" cy="59.8" rx="8.6" ry="2.8" transform="rotate(235 27.1 59.8)"/><ellipse cx="32.4" cy="57.5" rx="8.6" ry="2.8" transform="rotate(258 32.4 57.5)"/><ellipse cx="38.2" cy="57.3" rx="8.6" ry="2.8" transform="rotate(280 38.2 57.3)"/><ellipse cx="43.6" cy="59.5" rx="8.6" ry="2.8" transform="rotate(302 43.6 59.5)"/><ellipse cx="47.8" cy="63.5" rx="8.6" ry="2.8" transform="rotate(325 47.8 63.5)"/><ellipse cx="50.1" cy="68.8" rx="8.6" ry="2.8" transform="rotate(348 50.1 68.8)"/></g>
<circle cx="35.6" cy="74" r="4" fill="#e56a98"/>
<path d="M34 87 L32.4 108" stroke="#e56a98" stroke-width="2.2"/>
<path d="M37 90 C42 92 50 94 55 100 C52 106 44 108 40 105 C38 100 37 95 37 90Z" fill="#e56a98"/>
<g fill="#e56a98" opacity="1.0"><ellipse cx="32.4" cy="123.0" rx="6.5" ry="2.5" transform="rotate(185 32.4 123.0)"/><ellipse cx="33.8" cy="118.5" rx="6.5" ry="2.5" transform="rotate(209 33.8 118.5)"/><ellipse cx="36.9" cy="115.0" rx="6.5" ry="2.5" transform="rotate(234 36.9 115.0)"/><ellipse cx="41.2" cy="113.1" rx="6.5" ry="2.5" transform="rotate(258 41.2 113.1)"/><ellipse cx="45.8" cy="113.1" rx="6.5" ry="2.5" transform="rotate(282 45.8 113.1)"/><ellipse cx="50.1" cy="115.0" rx="6.5" ry="2.5" transform="rotate(306 50.1 115.0)"/><ellipse cx="53.2" cy="118.5" rx="6.5" ry="2.5" transform="rotate(331 53.2 118.5)"/><ellipse cx="54.6" cy="123.0" rx="6.5" ry="2.5" transform="rotate(355 54.6 123.0)"/></g>
<g fill="#e56a98" opacity="0.85"><ellipse cx="19.0" cy="54.9" rx="5.4" ry="2.0" transform="rotate(-50 19.0 54.9)"/><ellipse cx="21.9" cy="59.3" rx="5.4" ry="2.0" transform="rotate(-17 21.9 59.3)"/><ellipse cx="21.9" cy="64.7" rx="5.4" ry="2.0" transform="rotate(17 21.9 64.7)"/><ellipse cx="19.0" cy="69.1" rx="5.4" ry="2.0" transform="rotate(50 19.0 69.1)"/></g>
<g fill="none" stroke="#e56a98" stroke-width="1.3" opacity="0.45">
<circle cx="62" cy="62" r="3.2"/><circle cx="59.5" cy="70" r="3.2"/><circle cx="61" cy="79" r="2.8"/><path d="M58 90 C63 94 62 101 58 106"/><circle cx="62" cy="98" r="2.5"/><circle cx="21" cy="98" r="2.8"/><path d="M19 106 C23 109 21 113 19 116"/>
</g>
<rect x="0" y="0" width="100" height="150" fill="url(#shade)"/>
<ellipse cx="38" cy="62" rx="20" ry="30" fill="url(#hl)"/>
</g>
<path d="M32 37 L41 37.5" stroke="#e04050" stroke-width="1.8" stroke-dasharray="1.6 0.6"/>
</svg><svg class="ic" width="27" height="27" viewBox="0 0 27 27"><use href="#icon"/></svg></div><div class="cell" style="left:706px;top:120px"><svg class="th" width="100" height="150" viewBox="0 0 100 150">
<defs><clipPath id="c7"><path d="M18.8 27 L25.7 25.9 C28 33 31 40 35.6 45 C45 36 56 26 64.5 18.7 L73 19.8 C70 28 68.3 36 68.3 43.8 C66 55 65 62 65 67.7 C65.5 80 67 90 67.5 95 C69 105 70.5 112 70.7 119 C66 124 62 125 58 125 L34 125 C26 124 20 122 15.6 119 C15.6 110 15.6 100 15.6 95 C16 85 17 75 18 67.7 C17 60 16.4 52 16.4 47 C17 40 18 32 18.8 27 Z"/></clipPath></defs>
<path d="M17 31 C14.5 40 13 50 11.3 65.7 C9.5 78 8.2 88 7.5 94 C6.5 110 6 120 5.6 129.5 L15.5 129.5 C15.5 122 15.5 116 16 110 C18 100 20 90 20 80 C20 60 18 45 17 31 Z" fill="url(#skL)"/>
<path d="M63 18.5 C72 18.5 79 22 81 30 C82 45 83.5 60 84.4 75 C85 90 85.4 112 86.3 129.5 L70 129.5 C69 115 67 100 65 85 C64 70 65 50 63 18.5 Z" fill="url(#skR)"/>
<path d="M38 11 L54 11 L57 16 L66 18 L67 20 L40.7 38 L36 46 L23 27 L26 24 L31 20 L37 17 Z" fill="url(#neck)"/><path d="M37.9 6.6 L54.2 6.6 L54.5 12 L51 17.5 L45 19 L39.5 16.5 L38 12 Z" fill="#c98a66"/>
<path d="M27.3 6.6 L38.2 6.6 L38.8 12 L38 16.5 L33 9.5 L30.5 12 L29 21 L27.3 15 Z" fill="#171717"/><path d="M54 6.6 L64.6 6.6 L64.2 14 L59 15.2 L52.5 16.8 L54.5 12 Z" fill="#171717"/>
<path d="M15 118 L71 116 L72 129.5 L14.5 129.5 Z" fill="url(#jean)"/>
<g clip-path="url(#c7)">
<rect x="0" y="0" width="100" height="150" fill="#e8eaea"/>
<g fill="#c4bec0" opacity="1.0"><ellipse cx="22.7" cy="47.5" rx="10.1" ry="3.1" transform="rotate(185 22.7 47.5)"/><ellipse cx="24.5" cy="41.3" rx="10.1" ry="3.1" transform="rotate(206 24.5 41.3)"/><ellipse cx="28.4" cy="36.1" rx="10.1" ry="3.1" transform="rotate(228 28.4 36.1)"/><ellipse cx="33.9" cy="32.7" rx="10.1" ry="3.1" transform="rotate(250 33.9 32.7)"/><ellipse cx="40.3" cy="31.6" rx="10.1" ry="3.1" transform="rotate(271 40.3 31.6)"/><ellipse cx="46.6" cy="33.0" rx="10.1" ry="3.1" transform="rotate(292 46.6 33.0)"/><ellipse cx="52.1" cy="36.5" rx="10.1" ry="3.1" transform="rotate(314 52.1 36.5)"/><ellipse cx="55.8" cy="41.8" rx="10.1" ry="3.1" transform="rotate(336 55.8 41.8)"/><ellipse cx="57.3" cy="48.1" rx="10.1" ry="3.1" transform="rotate(357 57.3 48.1)"/><ellipse cx="56.5" cy="54.5" rx="10.1" ry="3.1" transform="rotate(378 56.5 54.5)"/><ellipse cx="53.3" cy="60.2" rx="10.1" ry="3.1" transform="rotate(400 53.3 60.2)"/></g>
<g fill="#c4bec0" opacity="1.0"><ellipse cx="50.3" cy="74.6" rx="8.6" ry="2.8" transform="rotate(10 50.3 74.6)"/><ellipse cx="48.1" cy="80.0" rx="8.6" ry="2.8" transform="rotate(32 48.1 80.0)"/><ellipse cx="44.1" cy="84.2" rx="8.6" ry="2.8" transform="rotate(55 44.1 84.2)"/><ellipse cx="38.8" cy="86.5" rx="8.6" ry="2.8" transform="rotate(78 38.8 86.5)"/><ellipse cx="33.0" cy="86.7" rx="8.6" ry="2.8" transform="rotate(100 33.0 86.7)"/><ellipse cx="27.6" cy="84.5" rx="8.6" ry="2.8" transform="rotate(122 27.6 84.5)"/><ellipse cx="23.4" cy="80.5" rx="8.6" ry="2.8" transform="rotate(145 23.4 80.5)"/><ellipse cx="21.1" cy="75.2" rx="8.6" ry="2.8" transform="rotate(168 21.1 75.2)"/><ellipse cx="20.9" cy="69.4" rx="8.6" ry="2.8" transform="rotate(190 20.9 69.4)"/><ellipse cx="23.1" cy="64.0" rx="8.6" ry="2.8" transform="rotate(212 23.1 64.0)"/><ellipse cx="27.1" cy="59.8" rx="8.6" ry="2.8" transform="rotate(235 27.1 59.8)"/><ellipse cx="32.4" cy="57.5" rx="8.6" ry="2.8" transform="rotate(258 32.4 57.5)"/><ellipse cx="38.2" cy="57.3" rx="8.6" ry="2.8" transform="rotate(280 38.2 57.3)"/><ellipse cx="43.6" cy="59.5" rx="8.6" ry="2.8" transform="rotate(302 43.6 59.5)"/><ellipse cx="47.8" cy="63.5" rx="8.6" ry="2.8" transform="rotate(325 47.8 63.5)"/><ellipse cx="50.1" cy="68.8" rx="8.6" ry="2.8" transform="rotate(348 50.1 68.8)"/></g>
<circle cx="35.6" cy="74" r="4" fill="#c4bec0"/>
<path d="M34 87 L32.4 108" stroke="#c4bec0" stroke-width="2.2"/>
<path d="M37 90 C42 92 50 94 55 100 C52 106 44 108 40 105 C38 100 37 95 37 90Z" fill="#c4bec0"/>
<g fill="#c4bec0" opacity="1.0"><ellipse cx="32.4" cy="123.0" rx="6.5" ry="2.5" transform="rotate(185 32.4 123.0)"/><ellipse cx="33.8" cy="118.5" rx="6.5" ry="2.5" transform="rotate(209 33.8 118.5)"/><ellipse cx="36.9" cy="115.0" rx="6.5" ry="2.5" transform="rotate(234 36.9 115.0)"/><ellipse cx="41.2" cy="113.1" rx="6.5" ry="2.5" transform="rotate(258 41.2 113.1)"/><ellipse cx="45.8" cy="113.1" rx="6.5" ry="2.5" transform="rotate(282 45.8 113.1)"/><ellipse cx="50.1" cy="115.0" rx="6.5" ry="2.5" transform="rotate(306 50.1 115.0)"/><ellipse cx="53.2" cy="118.5" rx="6.5" ry="2.5" transform="rotate(331 53.2 118.5)"/><ellipse cx="54.6" cy="123.0" rx="6.5" ry="2.5" transform="rotate(355 54.6 123.0)"/></g>
<g fill="#c4bec0" opacity="0.85"><ellipse cx="19.0" cy="54.9" rx="5.4" ry="2.0" transform="rotate(-50 19.0 54.9)"/><ellipse cx="21.9" cy="59.3" rx="5.4" ry="2.0" transform="rotate(-17 21.9 59.3)"/><ellipse cx="21.9" cy="64.7" rx="5.4" ry="2.0" transform="rotate(17 21.9 64.7)"/><ellipse cx="19.0" cy="69.1" rx="5.4" ry="2.0" transform="rotate(50 19.0 69.1)"/></g>
<g fill="none" stroke="#c4bec0" stroke-width="1.3" opacity="0.45">
<circle cx="62" cy="62" r="3.2"/><circle cx="59.5" cy="70" r="3.2"/><circle cx="61" cy="79" r="2.8"/><path d="M58 90 C63 94 62 101 58 106"/><circle cx="62" cy="98" r="2.5"/><circle cx="21" cy="98" r="2.8"/><path d="M19 106 C23 109 21 113 19 116"/>
</g>
<rect x="0" y="0" width="100" height="150" fill="url(#shade)"/>
<ellipse cx="38" cy="62" rx="20" ry="30" fill="url(#hl)"/>
</g>
<path d="M32 37 L41 37.5" stroke="#e04050" stroke-width="1.8" stroke-dasharray="1.6 0.6"/>
</svg><svg class="ic" width="27" height="27" viewBox="0 0 27 27"><use href="#icon"/></svg></div><div class="cell" style="left:806px;top:120px"><svg class="th" width="100" height="150" viewBox="0 0 100 150">
<defs><clipPath id="c8"><path d="M18.8 27 L25.7 25.9 C28 33 31 40 35.6 45 C45 36 56 26 64.5 18.7 L73 19.8 C70 28 68.3 36 68.3 43.8 C66 55 65 62 65 67.7 C65.5 80 67 90 67.5 95 C69 105 70.5 112 70.7 119 C66 124 62 125 58 125 L34 125 C26 124 20 122 15.6 119 C15.6 110 15.6 100 15.6 95 C16 85 17 75 18 67.7 C17 60 16.4 52 16.4 47 C17 40 18 32 18.8 27 Z"/></clipPath></defs>
<path d="M17 31 C14.5 40 13 50 11.3 65.7 C9.5 78 8.2 88 7.5 94 C6.5 110 6 120 5.6 129.5 L15.5 129.5 C15.5 122 15.5 116 16 110 C18 100 20 90 20 80 C20 60 18 45 17 31 Z" fill="url(#skL)"/>
<path d="M63 18.5 C72 18.5 79 22 81 30 C82 45 83.5 60 84.4 75 C85 90 85.4 112 86.3 129.5 L70 129.5 C69 115 67 100 65 85 C64 70 65 50 63 18.5 Z" fill="url(#skR)"/>
<path d="M38 11 L54 11 L57 16 L66 18 L67 20 L40.7 38 L36 46 L23 27 L26 24 L31 20 L37 17 Z" fill="url(#neck)"/><path d="M37.9 6.6 L54.2 6.6 L54.5 12 L51 17.5 L45 19 L39.5 16.5 L38 12 Z" fill="#c98a66"/>
<path d="M27.3 6.6 L38.2 6.6 L38.8 12 L38 16.5 L33 9.5 L30.5 12 L29 21 L27.3 15 Z" fill="#171717"/><path d="M54 6.6 L64.6 6.6 L64.2 14 L59 15.2 L52.5 16.8 L54.5 12 Z" fill="#171717"/>
<path d="M15 118 L71 116 L72 129.5 L14.5 129.5 Z" fill="url(#jean)"/>
<g clip-path="url(#c8)">
<rect x="0" y="0" width="100" height="150" fill="#c4e8bc"/>
<g fill="#58b858" opacity="1.0"><ellipse cx="22.7" cy="47.5" rx="10.1" ry="3.1" transform="rotate(185 22.7 47.5)"/><ellipse cx="24.5" cy="41.3" rx="10.1" ry="3.1" transform="rotate(206 24.5 41.3)"/><ellipse cx="28.4" cy="36.1" rx="10.1" ry="3.1" transform="rotate(228 28.4 36.1)"/><ellipse cx="33.9" cy="32.7" rx="10.1" ry="3.1" transform="rotate(250 33.9 32.7)"/><ellipse cx="40.3" cy="31.6" rx="10.1" ry="3.1" transform="rotate(271 40.3 31.6)"/><ellipse cx="46.6" cy="33.0" rx="10.1" ry="3.1" transform="rotate(292 46.6 33.0)"/><ellipse cx="52.1" cy="36.5" rx="10.1" ry="3.1" transform="rotate(314 52.1 36.5)"/><ellipse cx="55.8" cy="41.8" rx="10.1" ry="3.1" transform="rotate(336 55.8 41.8)"/><ellipse cx="57.3" cy="48.1" rx="10.1" ry="3.1" transform="rotate(357 57.3 48.1)"/><ellipse cx="56.5" cy="54.5" rx="10.1" ry="3.1" transform="rotate(378 56.5 54.5)"/><ellipse cx="53.3" cy="60.2" rx="10.1" ry="3.1" transform="rotate(400 53.3 60.2)"/></g>
<g fill="#58b858" opacity="1.0"><ellipse cx="50.3" cy="74.6" rx="8.6" ry="2.8" transform="rotate(10 50.3 74.6)"/><ellipse cx="48.1" cy="80.0" rx="8.6" ry="2.8" transform="rotate(32 48.1 80.0)"/><ellipse cx="44.1" cy="84.2" rx="8.6" ry="2.8" transform="rotate(55 44.1 84.2)"/><ellipse cx="38.8" cy="86.5" rx="8.6" ry="2.8" transform="rotate(78 38.8 86.5)"/><ellipse cx="33.0" cy="86.7" rx="8.6" ry="2.8" transform="rotate(100 33.0 86.7)"/><ellipse cx="27.6" cy="84.5" rx="8.6" ry="2.8" transform="rotate(122 27.6 84.5)"/><ellipse cx="23.4" cy="80.5" rx="8.6" ry="2.8" transform="rotate(145 23.4 80.5)"/><ellipse cx="21.1" cy="75.2" rx="8.6" ry="2.8" transform="rotate(168 21.1 75.2)"/><ellipse cx="20.9" cy="69.4" rx="8.6" ry="2.8" transform="rotate(190 20.9 69.4)"/><ellipse cx="23.1" cy="64.0" rx="8.6" ry="2.8" transform="rotate(212 23.1 64.0)"/><ellipse cx="27.1" cy="59.8" rx="8.6" ry="2.8" transform="rotate(235 27.1 59.8)"/><ellipse cx="32.4" cy="57.5" rx="8.6" ry="2.8" transform="rotate(258 32.4 57.5)"/><ellipse cx="38.2" cy="57.3" rx="8.6" ry="2.8" transform="rotate(280 38.2 57.3)"/><ellipse cx="43.6" cy="59.5" rx="8.6" ry="2.8" transform="rotate(302 43.6 59.5)"/><ellipse cx="47.8" cy="63.5" rx="8.6" ry="2.8" transform="rotate(325 47.8 63.5)"/><ellipse cx="50.1" cy="68.8" rx="8.6" ry="2.8" transform="rotate(348 50.1 68.8)"/></g>
<circle cx="35.6" cy="74" r="4" fill="#58b858"/>
<path d="M34 87 L32.4 108" stroke="#58b858" stroke-width="2.2"/>
<path d="M37 90 C42 92 50 94 55 100 C52 106 44 108 40 105 C38 100 37 95 37 90Z" fill="#58b858"/>
<g fill="#58b858" opacity="1.0"><ellipse cx="32.4" cy="123.0" rx="6.5" ry="2.5" transform="rotate(185 32.4 123.0)"/><ellipse cx="33.8" cy="118.5" rx="6.5" ry="2.5" transform="rotate(209 33.8 118.5)"/><ellipse cx="36.9" cy="115.0" rx="6.5" ry="2.5" transform="rotate(234 36.9 115.0)"/><ellipse cx="41.2" cy="113.1" rx="6.5" ry="2.5" transform="rotate(258 41.2 113.1)"/><ellipse cx="45.8" cy="113.1" rx="6.5" ry="2.5" transform="rotate(282 45.8 113.1)"/><ellipse cx="50.1" cy="115.0" rx="6.5" ry="2.5" transform="rotate(306 50.1 115.0)"/><ellipse cx="53.2" cy="118.5" rx="6.5" ry="2.5" transform="rotate(331 53.2 118.5)"/><ellipse cx="54.6" cy="123.0" rx="6.5" ry="2.5" transform="rotate(355 54.6 123.0)"/></g>
<g fill="#58b858" opacity="0.85"><ellipse cx="19.0" cy="54.9" rx="5.4" ry="2.0" transform="rotate(-50 19.0 54.9)"/><ellipse cx="21.9" cy="59.3" rx="5.4" ry="2.0" transform="rotate(-17 21.9 59.3)"/><ellipse cx="21.9" cy="64.7" rx="5.4" ry="2.0" transform="rotate(17 21.9 64.7)"/><ellipse cx="19.0" cy="69.1" rx="5.4" ry="2.0" transform="rotate(50 19.0 69.1)"/></g>
<g fill="none" stroke="#58b858" stroke-width="1.3" opacity="0.45">
<circle cx="62" cy="62" r="3.2"/><circle cx="59.5" cy="70" r="3.2"/><circle cx="61" cy="79" r="2.8"/><path d="M58 90 C63 94 62 101 58 106"/><circle cx="62" cy="98" r="2.5"/><circle cx="21" cy="98" r="2.8"/><path d="M19 106 C23 109 21 113 19 116"/>
</g>
<rect x="0" y="0" width="100" height="150" fill="url(#shade)"/>
<ellipse cx="38" cy="62" rx="20" ry="30" fill="url(#hl)"/>
</g>
<path d="M32 37 L41 37.5" stroke="#e04050" stroke-width="1.8" stroke-dasharray="1.6 0.6"/>
</svg><svg class="ic" width="27" height="27" viewBox="0 0 27 27"><use href="#icon"/></svg></div><div class="cell sel" style="left:906px;top:120px"><svg class="th" width="100" height="150" viewBox="0 0 100 150">
<defs><clipPath id="s0"><path d="M62 15.6 C70 15.8 77 17.5 81 22 C84.2 26 85.2 35 85.4 48 L85.4 67 L68.5 69.8 C69 50 69 35 68.75 27 Z"/></clipPath>
<clipPath id="u0"><path d="M16 95 L70 86 L71 114 C66 119 50 121 40 121 C30 121 22 120 16 116 Z"/></clipPath>
<clipPath id="l0"><path d="M18.5 27 C15 33 13.5 50 13.5 67 L18.5 68 Z"/></clipPath></defs>
<path d="M13.5 66 L19.8 66 C17.5 95 15 110 13.5 129 L6.25 129 C8 105 11 85 13.5 66 Z" fill="url(#skL)"/>
<path d="M69.5 66 L85.4 66 C85 90 84 110 84.4 129 L71.9 129 C71.5 110 70.5 90 69.5 66 Z" fill="url(#skR)"/>
<g clip-path="url(#s0)"><rect x="0" y="0" width="100" height="150" fill="#15171c"/><rect x="73.0" y="0" width="3.4" height="150" fill="#f2f2f2"/><rect x="81.0" y="0" width="3.4" height="150" fill="#f2f2f2"/><rect x="89.0" y="0" width="3.4" height="150" fill="#f2f2f2"/></g>
<path d="M68.5 62.5 L85.5 61.5 L85.5 68 L69 69.8 Z" fill="#f2f2f2"/>
<g clip-path="url(#l0)"><rect x="0" y="0" width="100" height="150" fill="#15171c"/><rect x="13.0" y="0" width="1.8" height="150" fill="#f2f2f2"/><rect x="17.0" y="0" width="1.8" height="150" fill="#f2f2f2"/></g>
<path d="M13.5 62 L18.5 62.5 L18.5 69 L13.5 68.5 Z" fill="#f2f2f2"/>
<g clip-path="url(#u0)"><rect x="0" y="0" width="100" height="150" fill="#f2f2f2"/><rect x="18.0" y="0" width="5.5" height="150" fill="#15171c"/><rect x="29.0" y="0" width="5.5" height="150" fill="#15171c"/><rect x="40.0" y="0" width="5.5" height="150" fill="#15171c"/><rect x="51.0" y="0" width="5.5" height="150" fill="#15171c"/><rect x="62.0" y="0" width="5.5" height="150" fill="#15171c"/></g>
<path d="M13.5 115 C25 119 35 120 41.7 120 C55 119.5 65 117.5 71.9 115.5 L71.9 129.2 L13.5 129.2 Z" fill="url(#jean2)"/>
<path d="M36 8 L58 8 L59 15 L48 30 L39.6 40 L34 18 Z" fill="url(#neck)"/>
<path d="M31 37 L40 37 L39 52 L34 48 Z" fill="#15171c"/>
<path d="M31 12.5 L36 10 L39.6 40 L34 41 L31 30 Z" fill="#f2f2f2"/>
<path d="M53 11 L62 13.5 L57 22 L50 27 Z" fill="#f2f2f2"/>
<path d="M36.5 6.25 L55.2 6.25 L55.5 12 L51 18 L43 19 L37.5 13 Z" fill="#c98a66"/><path d="M29 6.25 L37 6.25 L37.5 12 L35 15 L33 20.8 L29 19 Z" fill="#161616"/><path d="M55 6.25 L64.6 6.25 L64.6 13.5 L58 12.5 L54.8 12 Z" fill="#161616"/>
<path d="M17.7 27 L30 21 L36 45 L39 54 L53 17 L62.5 15.6 C66 20 68.75 24 68.75 30 C69.3 50 69.8 75 69.8 95.8 L41.7 108.3 L18.75 103 C17.5 90 16.7 75 16.7 62.5 C16.7 50 17 38 17.7 27 Z" fill="#22252e"/>
<path d="M17.7 27 L30 21 L36 45 L39 54 L53 17 L62.5 15.6 C66 20 68.75 24 68.75 30 C69.3 50 69.8 75 69.8 95.8 L41.7 108.3 L18.75 103 C17.5 90 16.7 75 16.7 62.5 C16.7 50 17 38 17.7 27 Z" fill="url(#vsh)"/>
<circle cx="21.9" cy="31.25" r="2.2" fill="#30c8e8"/><circle cx="29.2" cy="35.4" r="3" fill="#3a8ef0"/><circle cx="19.8" cy="38.5" r="2" fill="#e83030"/><circle cx="25" cy="51.7" r="2.5" fill="#f040b8"/><circle cx="19.8" cy="57.3" r="2" fill="#f0f0f0"/><circle cx="26" cy="61.5" r="3" fill="#b8c0c8"/><circle cx="37.5" cy="53" r="4.2" fill="#f0a020"/><circle cx="48" cy="50" r="3" fill="#f8e030"/><circle cx="57.3" cy="49.6" r="3" fill="#40e0c8"/><circle cx="58.3" cy="25" r="2.5" fill="#e0a040"/><circle cx="37.5" cy="61.5" r="3" fill="#f0a838"/><circle cx="43.75" cy="62.5" r="3" fill="#6aa8c8"/><circle cx="51" cy="58.3" r="2.5" fill="#d8a060"/><circle cx="22.9" cy="76" r="2" fill="#ff50b0"/><circle cx="29" cy="74" r="1.4" fill="#e0e0e0"/><circle cx="51" cy="78" r="2.5" fill="#ff40c0"/><circle cx="55.2" cy="81.25" r="3" fill="#ffb020"/><circle cx="58.3" cy="71.9" r="2.2" fill="#50c040"/><circle cx="35.4" cy="85.4" r="2" fill="#f0f0f0"/><circle cx="37.5" cy="91.7" r="2.5" fill="#5090f0"/><circle cx="44.8" cy="88.5" r="3" fill="#30e070"/><circle cx="51" cy="94.8" r="5" fill="#e4e4ea"/><circle cx="38" cy="45" r="1.8" fill="#30c060"/><circle cx="30" cy="92" r="1.5" fill="#3060c0"/><circle cx="21" cy="70" r="1.5" fill="#ffd030"/>
<path d="M46 25 L55 23 L50.5 31 Z" fill="#d8f4f0"/><path d="M50.5 31 L50.5 37 M48 37 L53 37" stroke="#e0f0f0" stroke-width="0.9"/>
<rect x="42.7" y="41" width="11.3" height="3.8" fill="#ecdcdc"/><rect x="44.5" y="42" width="7" height="1.8" fill="#c03030"/>
<path d="M23 88.5 L26 82 L29 88.5 Z" fill="#f0e020"/>
<path d="M38 79 L45 74.5 L43 81 Z" fill="#e89050"/>
<path d="M19 46 L25 42 L26 45.5 L20 49 Z" fill="#28b878"/>
</svg><svg class="ic" width="27" height="27" viewBox="0 0 27 27"><use href="#icon"/></svg></div><div class="cell sel" style="left:1006px;top:120px"><svg class="th" width="100" height="150" viewBox="0 0 100 150">
<defs><clipPath id="s1"><path d="M62 15.6 C70 15.8 77 17.5 81 22 C84.2 26 85.2 35 85.4 48 L85.4 67 L68.5 69.8 C69 50 69 35 68.75 27 Z"/></clipPath>
<clipPath id="u1"><path d="M16 95 L70 86 L71 114 C66 119 50 121 40 121 C30 121 22 120 16 116 Z"/></clipPath>
<clipPath id="l1"><path d="M18.5 27 C15 33 13.5 50 13.5 67 L18.5 68 Z"/></clipPath></defs>
<path d="M13.5 66 L19.8 66 C17.5 95 15 110 13.5 129 L6.25 129 C8 105 11 85 13.5 66 Z" fill="url(#skL)"/>
<path d="M69.5 66 L85.4 66 C85 90 84 110 84.4 129 L71.9 129 C71.5 110 70.5 90 69.5 66 Z" fill="url(#skR)"/>
<g clip-path="url(#s1)"><rect x="0" y="0" width="100" height="150" fill="#2f62b4"/><rect x="73.0" y="0" width="3.4" height="150" fill="#f0f2f6"/><rect x="81.0" y="0" width="3.4" height="150" fill="#f0f2f6"/><rect x="89.0" y="0" width="3.4" height="150" fill="#f0f2f6"/></g>
<path d="M68.5 62.5 L85.5 61.5 L85.5 68 L69 69.8 Z" fill="#f2f2f2"/>
<g clip-path="url(#l1)"><rect x="0" y="0" width="100" height="150" fill="#2f62b4"/><rect x="13.0" y="0" width="1.8" height="150" fill="#f0f2f6"/><rect x="17.0" y="0" width="1.8" height="150" fill="#f0f2f6"/></g>
<path d="M13.5 62 L18.5 62.5 L18.5 69 L13.5 68.5 Z" fill="#f2f2f2"/>
<g clip-path="url(#u1)"><rect x="0" y="0" width="100" height="150" fill="#f0f2f6"/><rect x="18.0" y="0" width="5.5" height="150" fill="#2f62b4"/><rect x="29.0" y="0" width="5.5" height="150" fill="#2f62b4"/><rect x="40.0" y="0" width="5.5" height="150" fill="#2f62b4"/><rect x="51.0" y="0" width="5.5" height="150" fill="#2f62b4"/><rect x="62.0" y="0" width="5.5" height="150" fill="#2f62b4"/></g>
<path d="M13.5 115 C25 119 35 120 41.7 120 C55 119.5 65 117.5 71.9 115.5 L71.9 129.2 L13.5 129.2 Z" fill="url(#jean2)"/>
<path d="M36 8 L58 8 L59 15 L48 30 L39.6 40 L34 18 Z" fill="url(#neck)"/>
<path d="M31 37 L40 37 L39 52 L34 48 Z" fill="#2f62b4"/>
<path d="M31 12.5 L36 10 L39.6 40 L34 41 L31 30 Z" fill="#f2f2f2"/>
<path d="M53 11 L62 13.5 L57 22 L50 27 Z" fill="#f2f2f2"/>
<path d="M36.5 6.25 L55.2 6.25 L55.5 12 L51 18 L43 19 L37.5 13 Z" fill="#c98a66"/><path d="M29 6.25 L37 6.25 L37.5 12 L35 15 L33 20.8 L29 19 Z" fill="#161616"/><path d="M55 6.25 L64.6 6.25 L64.6 13.5 L58 12.5 L54.8 12 Z" fill="#161616"/>
<path d="M17.7 27 L30 21 L36 45 L39 54 L53 17 L62.5 15.6 C66 20 68.75 24 68.75 30 C69.3 50 69.8 75 69.8 95.8 L41.7 108.3 L18.75 103 C17.5 90 16.7 75 16.7 62.5 C16.7 50 17 38 17.7 27 Z" fill="#23262e"/>
<path d="M17.7 27 L30 21 L36 45 L39 54 L53 17 L62.5 15.6 C66 20 68.75 24 68.75 30 C69.3 50 69.8 75 69.8 95.8 L41.7 108.3 L18.75 103 C17.5 90 16.7 75 16.7 62.5 C16.7 50 17 38 17.7 27 Z" fill="url(#vsh)"/>
<circle cx="21.9" cy="31.25" r="2.2" fill="#30c8e8"/><circle cx="29.2" cy="35.4" r="3" fill="#3a8ef0"/><circle cx="19.8" cy="38.5" r="2" fill="#e83030"/><circle cx="25" cy="51.7" r="2.5" fill="#f040b8"/><circle cx="19.8" cy="57.3" r="2" fill="#f0f0f0"/><circle cx="26" cy="61.5" r="3" fill="#b8c0c8"/><circle cx="37.5" cy="53" r="4.2" fill="#f0a020"/><circle cx="48" cy="50" r="3" fill="#f8e030"/><circle cx="57.3" cy="49.6" r="3" fill="#40e0c8"/><circle cx="58.3" cy="25" r="2.5" fill="#e0a040"/><circle cx="37.5" cy="61.5" r="3" fill="#f0a838"/><circle cx="43.75" cy="62.5" r="3" fill="#6aa8c8"/><circle cx="51" cy="58.3" r="2.5" fill="#d8a060"/><circle cx="22.9" cy="76" r="2" fill="#ff50b0"/><circle cx="29" cy="74" r="1.4" fill="#e0e0e0"/><circle cx="51" cy="78" r="2.5" fill="#ff40c0"/><circle cx="55.2" cy="81.25" r="3" fill="#ffb020"/><circle cx="58.3" cy="71.9" r="2.2" fill="#50c040"/><circle cx="35.4" cy="85.4" r="2" fill="#f0f0f0"/><circle cx="37.5" cy="91.7" r="2.5" fill="#5090f0"/><circle cx="44.8" cy="88.5" r="3" fill="#30e070"/><circle cx="51" cy="94.8" r="5" fill="#e4e4ea"/><circle cx="38" cy="45" r="1.8" fill="#30c060"/><circle cx="30" cy="92" r="1.5" fill="#3060c0"/><circle cx="21" cy="70" r="1.5" fill="#ffd030"/>
<path d="M46 25 L55 23 L50.5 31 Z" fill="#d8f4f0"/><path d="M50.5 31 L50.5 37 M48 37 L53 37" stroke="#e0f0f0" stroke-width="0.9"/>
<rect x="42.7" y="41" width="11.3" height="3.8" fill="#ecdcdc"/><rect x="44.5" y="42" width="7" height="1.8" fill="#c03030"/>
<path d="M23 88.5 L26 82 L29 88.5 Z" fill="#f0e020"/>
<path d="M38 79 L45 74.5 L43 81 Z" fill="#e89050"/>
<path d="M19 46 L25 42 L26 45.5 L20 49 Z" fill="#28b878"/>
</svg><svg class="ic" width="27" height="27" viewBox="0 0 27 27"><use href="#icon"/></svg></div><div class="cell sel" style="left:1106px;top:120px"><svg class="th" width="100" height="150" viewBox="0 0 100 150">
<defs><clipPath id="s2"><path d="M62 15.6 C70 15.8 77 17.5 81 22 C84.2 26 85.2 35 85.4 48 L85.4 67 L68.5 69.8 C69 50 69 35 68.75 27 Z"/></clipPath>
<clipPath id="u2"><path d="M16 95 L70 86 L71 114 C66 119 50 121 40 121 C30 121 22 120 16 116 Z"/></clipPath>
<clipPath id="l2"><path d="M18.5 27 C15 33 13.5 50 13.5 67 L18.5 68 Z"/></clipPath></defs>
<path d="M13.5 66 L19.8 66 C17.5 95 15 110 13.5 129 L6.25 129 C8 105 11 85 13.5 66 Z" fill="url(#skL)"/>
<path d="M69.5 66 L85.4 66 C85 90 84 110 84.4 129 L71.9 129 C71.5 110 70.5 90 69.5 66 Z" fill="url(#skR)"/>
<g clip-path="url(#s2)"><rect x="0" y="0" width="100" height="150" fill="#e8b838"/><rect x="73.0" y="0" width="3.4" height="150" fill="#f6f0dc"/><rect x="81.0" y="0" width="3.4" height="150" fill="#f6f0dc"/><rect x="89.0" y="0" width="3.4" height="150" fill="#f6f0dc"/></g>
<path d="M68.5 62.5 L85.5 61.5 L85.5 68 L69 69.8 Z" fill="#f2f2f2"/>
<g clip-path="url(#l2)"><rect x="0" y="0" width="100" height="150" fill="#e8b838"/><rect x="13.0" y="0" width="1.8" height="150" fill="#f6f0dc"/><rect x="17.0" y="0" width="1.8" height="150" fill="#f6f0dc"/></g>
<path d="M13.5 62 L18.5 62.5 L18.5 69 L13.5 68.5 Z" fill="#f2f2f2"/>
<g clip-path="url(#u2)"><rect x="0" y="0" width="100" height="150" fill="#f6f0dc"/><rect x="18.0" y="0" width="5.5" height="150" fill="#e8b838"/><rect x="29.0" y="0" width="5.5" height="150" fill="#e8b838"/><rect x="40.0" y="0" width="5.5" height="150" fill="#e8b838"/><rect x="51.0" y="0" width="5.5" height="150" fill="#e8b838"/><rect x="62.0" y="0" width="5.5" height="150" fill="#e8b838"/></g>
<path d="M13.5 115 C25 119 35 120 41.7 120 C55 119.5 65 117.5 71.9 115.5 L71.9 129.2 L13.5 129.2 Z" fill="url(#jean2)"/>
<path d="M36 8 L58 8 L59 15 L48 30 L39.6 40 L34 18 Z" fill="url(#neck)"/>
<path d="M31 37 L40 37 L39 52 L34 48 Z" fill="#e8b838"/>
<path d="M31 12.5 L36 10 L39.6 40 L34 41 L31 30 Z" fill="#f2f2f2"/>
<path d="M53 11 L62 13.5 L57 22 L50 27 Z" fill="#f2f2f2"/>
<path d="M36.5 6.25 L55.2 6.25 L55.5 12 L51 18 L43 19 L37.5 13 Z" fill="#c98a66"/><path d="M29 6.25 L37 6.25 L37.5 12 L35 15 L33 20.8 L29 19 Z" fill="#161616"/><path d="M55 6.25 L64.6 6.25 L64.6 13.5 L58 12.5 L54.8 12 Z" fill="#161616"/>
<path d="M17.7 27 L30 21 L36 45 L39 54 L53 17 L62.5 15.6 C66 20 68.75 24 68.75 30 C69.3 50 69.8 75 69.8 95.8 L41.7 108.3 L18.75 103 C17.5 90 16.7 75 16.7 62.5 C16.7 50 17 38 17.7 27 Z" fill="#23262e"/>
<path d="M17.7 27 L30 21 L36 45 L39 54 L53 17 L62.5 15.6 C66 20 68.75 24 68.75 30 C69.3 50 69.8 75 69.8 95.8 L41.7 108.3 L18.75 103 C17.5 90 16.7 75 16.7 62.5 C16.7 50 17 38 17.7 27 Z" fill="url(#vsh)"/>
<circle cx="21.9" cy="31.25" r="2.2" fill="#30c8e8"/><circle cx="29.2" cy="35.4" r="3" fill="#3a8ef0"/><circle cx="19.8" cy="38.5" r="2" fill="#e83030"/><circle cx="25" cy="51.7" r="2.5" fill="#f040b8"/><circle cx="19.8" cy="57.3" r="2" fill="#f0f0f0"/><circle cx="26" cy="61.5" r="3" fill="#b8c0c8"/><circle cx="37.5" cy="53" r="4.2" fill="#f0a020"/><circle cx="48" cy="50" r="3" fill="#f8e030"/><circle cx="57.3" cy="49.6" r="3" fill="#40e0c8"/><circle cx="58.3" cy="25" r="2.5" fill="#e0a040"/><circle cx="37.5" cy="61.5" r="3" fill="#f0a838"/><circle cx="43.75" cy="62.5" r="3" fill="#6aa8c8"/><circle cx="51" cy="58.3" r="2.5" fill="#d8a060"/><circle cx="22.9" cy="76" r="2" fill="#ff50b0"/><circle cx="29" cy="74" r="1.4" fill="#e0e0e0"/><circle cx="51" cy="78" r="2.5" fill="#ff40c0"/><circle cx="55.2" cy="81.25" r="3" fill="#ffb020"/><circle cx="58.3" cy="71.9" r="2.2" fill="#50c040"/><circle cx="35.4" cy="85.4" r="2" fill="#f0f0f0"/><circle cx="37.5" cy="91.7" r="2.5" fill="#5090f0"/><circle cx="44.8" cy="88.5" r="3" fill="#30e070"/><circle cx="51" cy="94.8" r="5" fill="#e4e4ea"/><circle cx="38" cy="45" r="1.8" fill="#30c060"/><circle cx="30" cy="92" r="1.5" fill="#3060c0"/><circle cx="21" cy="70" r="1.5" fill="#ffd030"/>
<path d="M46 25 L55 23 L50.5 31 Z" fill="#d8f4f0"/><path d="M50.5 31 L50.5 37 M48 37 L53 37" stroke="#e0f0f0" stroke-width="0.9"/>
<rect x="42.7" y="41" width="11.3" height="3.8" fill="#ecdcdc"/><rect x="44.5" y="42" width="7" height="1.8" fill="#c03030"/>
<path d="M23 88.5 L26 82 L29 88.5 Z" fill="#f0e020"/>
<path d="M38 79 L45 74.5 L43 81 Z" fill="#e89050"/>
<path d="M19 46 L25 42 L26 45.5 L20 49 Z" fill="#28b878"/>
</svg><svg class="ic" width="27" height="27" viewBox="0 0 27 27"><use href="#icon"/></svg></div><div class="cell sel" style="left:6px;top:270px"><svg class="th" width="100" height="150" viewBox="0 0 100 150">
<defs><clipPath id="s3"><path d="M62 15.6 C70 15.8 77 17.5 81 22 C84.2 26 85.2 35 85.4 48 L85.4 67 L68.5 69.8 C69 50 69 35 68.75 27 Z"/></clipPath>
<clipPath id="u3"><path d="M16 95 L70 86 L71 114 C66 119 50 121 40 121 C30 121 22 120 16 116 Z"/></clipPath>
<clipPath id="l3"><path d="M18.5 27 C15 33 13.5 50 13.5 67 L18.5 68 Z"/></clipPath></defs>
<path d="M13.5 66 L19.8 66 C17.5 95 15 110 13.5 129 L6.25 129 C8 105 11 85 13.5 66 Z" fill="url(#skL)"/>
<path d="M69.5 66 L85.4 66 C85 90 84 110 84.4 129 L71.9 129 C71.5 110 70.5 90 69.5 66 Z" fill="url(#skR)"/>
<g clip-path="url(#s3)"><rect x="0" y="0" width="100" height="150" fill="#2f9a3a"/><rect x="73.0" y="0" width="3.4" height="150" fill="#f0f0f0"/><rect x="81.0" y="0" width="3.4" height="150" fill="#f0f0f0"/><rect x="89.0" y="0" width="3.4" height="150" fill="#f0f0f0"/></g>
<path d="M68.5 62.5 L85.5 61.5 L85.5 68 L69 69.8 Z" fill="#f2f2f2"/>
<g clip-path="url(#l3)"><rect x="0" y="0" width="100" height="150" fill="#2f9a3a"/><rect x="13.0" y="0" width="1.8" height="150" fill="#f0f0f0"/><rect x="17.0" y="0" width="1.8" height="150" fill="#f0f0f0"/></g>
<path d="M13.5 62 L18.5 62.5 L18.5 69 L13.5 68.5 Z" fill="#f2f2f2"/>
<g clip-path="url(#u3)"><rect x="0" y="0" width="100" height="150" fill="#f0f0f0"/><rect x="18.0" y="0" width="5.5" height="150" fill="#2f9a3a"/><rect x="29.0" y="0" width="5.5" height="150" fill="#2f9a3a"/><rect x="40.0" y="0" width="5.5" height="150" fill="#2f9a3a"/><rect x="51.0" y="0" width="5.5" height="150" fill="#2f9a3a"/><rect x="62.0" y="0" width="5.5" height="150" fill="#2f9a3a"/></g>
<path d="M13.5 115 C25 119 35 120 41.7 120 C55 119.5 65 117.5 71.9 115.5 L71.9 129.2 L13.5 129.2 Z" fill="url(#jean2)"/>
<path d="M36 8 L58 8 L59 15 L48 30 L39.6 40 L34 18 Z" fill="url(#neck)"/>
<path d="M31 37 L40 37 L39 52 L34 48 Z" fill="#2f9a3a"/>
<path d="M31 12.5 L36 10 L39.6 40 L34 41 L31 30 Z" fill="#f2f2f2"/>
<path d="M53 11 L62 13.5 L57 22 L50 27 Z" fill="#f2f2f2"/>
<path d="M36.5 6.25 L55.2 6.25 L55.5 12 L51 18 L43 19 L37.5 13 Z" fill="#c98a66"/><path d="M29 6.25 L37 6.25 L37.5 12 L35 15 L33 20.8 L29 19 Z" fill="#161616"/><path d="M55 6.25 L64.6 6.25 L64.6 13.5 L58 12.5 L54.8 12 Z" fill="#161616"/>
<path d="M17.7 27 L30 21 L36 45 L39 54 L53 17 L62.5 15.6 C66 20 68.75 24 68.75 30 C69.3 50 69.8 75 69.8 95.8 L41.7 108.3 L18.75 103 C17.5 90 16.7 75 16.7 62.5 C16.7 50 17 38 17.7 27 Z" fill="#1e2438"/>
<path d="M17.7 27 L30 21 L36 45 L39 54 L53 17 L62.5 15.6 C66 20 68.75 24 68.75 30 C69.3 50 69.8 75 69.8 95.8 L41.7 108.3 L18.75 103 C17.5 90 16.7 75 16.7 62.5 C16.7 50 17 38 17.7 27 Z" fill="url(#vsh)"/>
<circle cx="21.9" cy="31.25" r="2.2" fill="#30c8e8"/><circle cx="29.2" cy="35.4" r="3" fill="#3a8ef0"/><circle cx="19.8" cy="38.5" r="2" fill="#e83030"/><circle cx="25" cy="51.7" r="2.5" fill="#f040b8"/><circle cx="19.8" cy="57.3" r="2" fill="#f0f0f0"/><circle cx="26" cy="61.5" r="3" fill="#b8c0c8"/><circle cx="37.5" cy="53" r="4.2" fill="#f0a020"/><circle cx="48" cy="50" r="3" fill="#f8e030"/><circle cx="57.3" cy="49.6" r="3" fill="#40e0c8"/><circle cx="58.3" cy="25" r="2.5" fill="#e0a040"/><circle cx="37.5" cy="61.5" r="3" fill="#f0a838"/><circle cx="43.75" cy="62.5" r="3" fill="#6aa8c8"/><circle cx="51" cy="58.3" r="2.5" fill="#d8a060"/><circle cx="22.9" cy="76" r="2" fill="#ff50b0"/><circle cx="29" cy="74" r="1.4" fill="#e0e0e0"/><circle cx="51" cy="78" r="2.5" fill="#ff40c0"/><circle cx="55.2" cy="81.25" r="3" fill="#ffb020"/><circle cx="58.3" cy="71.9" r="2.2" fill="#50c040"/><circle cx="35.4" cy="85.4" r="2" fill="#f0f0f0"/><circle cx="37.5" cy="91.7" r="2.5" fill="#5090f0"/><circle cx="44.8" cy="88.5" r="3" fill="#30e070"/><circle cx="51" cy="94.8" r="5" fill="#e4e4ea"/><circle cx="38" cy="45" r="1.8" fill="#30c060"/><circle cx="30" cy="92" r="1.5" fill="#3060c0"/><circle cx="21" cy="70" r="1.5" fill="#ffd030"/>
<path d="M46 25 L55 23 L50.5 31 Z" fill="#d8f4f0"/><path d="M50.5 31 L50.5 37 M48 37 L53 37" stroke="#e0f0f0" stroke-width="0.9"/>
<rect x="42.7" y="41" width="11.3" height="3.8" fill="#ecdcdc"/><rect x="44.5" y="42" width="7" height="1.8" fill="#c03030"/>
<path d="M23 88.5 L26 82 L29 88.5 Z" fill="#f0e020"/>
<path d="M38 79 L45 74.5 L43 81 Z" fill="#e89050"/>
<path d="M19 46 L25 42 L26 45.5 L20 49 Z" fill="#28b878"/>
</svg><svg class="ic" width="27" height="27" viewBox="0 0 27 27"><use href="#icon"/></svg></div><div class="cell sel" style="left:106px;top:270px"><svg class="th" width="100" height="150" viewBox="0 0 100 150">
<defs><clipPath id="s4"><path d="M62 15.6 C70 15.8 77 17.5 81 22 C84.2 26 85.2 35 85.4 48 L85.4 67 L68.5 69.8 C69 50 69 35 68.75 27 Z"/></clipPath>
<clipPath id="u4"><path d="M16 95 L70 86 L71 114 C66 119 50 121 40 121 C30 121 22 120 16 116 Z"/></clipPath>
<clipPath id="l4"><path d="M18.5 27 C15 33 13.5 50 13.5 67 L18.5 68 Z"/></clipPath></defs>
<path d="M13.5 66 L19.8 66 C17.5 95 15 110 13.5 129 L6.25 129 C8 105 11 85 13.5 66 Z" fill="url(#skL)"/>
<path d="M69.5 66 L85.4 66 C85 90 84 110 84.4 129 L71.9 129 C71.5 110 70.5 90 69.5 66 Z" fill="url(#skR)"/>
<g clip-path="url(#s4)"><rect x="0" y="0" width="100" height="150" fill="#e07a22"/><rect x="73.0" y="0" width="3.4" height="150" fill="#1c2038"/><rect x="81.0" y="0" width="3.4" height="150" fill="#1c2038"/><rect x="89.0" y="0" width="3.4" height="150" fill="#1c2038"/></g>
<path d="M68.5 62.5 L85.5 61.5 L85.5 68 L69 69.8 Z" fill="#e07a22"/>
<g clip-path="url(#l4)"><rect x="0" y="0" width="100" height="150" fill="#e07a22"/><rect x="13.0" y="0" width="1.8" height="150" fill="#1c2038"/><rect x="17.0" y="0" width="1.8" height="150" fill="#1c2038"/></g>
<path d="M13.5 62 L18.5 62.5 L18.5 69 L13.5 68.5 Z" fill="#e07a22"/>
<g clip-path="url(#u4)"><rect x="0" y="0" width="100" height="150" fill="#1c2038"/><rect x="18.0" y="0" width="5.5" height="150" fill="#e07a22"/><rect x="29.0" y="0" width="5.5" height="150" fill="#e07a22"/><rect x="40.0" y="0" width="5.5" height="150" fill="#e07a22"/><rect x="51.0" y="0" width="5.5" height="150" fill="#e07a22"/><rect x="62.0" y="0" width="5.5" height="150" fill="#e07a22"/></g>
<path d="M13.5 115 C25 119 35 120 41.7 120 C55 119.5 65 117.5 71.9 115.5 L71.9 129.2 L13.5 129.2 Z" fill="url(#jean2)"/>
<path d="M36 8 L58 8 L59 15 L48 30 L39.6 40 L34 18 Z" fill="url(#neck)"/>
<path d="M31 37 L40 37 L39 52 L34 48 Z" fill="#e07a22"/>
<path d="M31 12.5 L36 10 L39.6 40 L34 41 L31 30 Z" fill="#e07a22"/>
<path d="M53 11 L62 13.5 L57 22 L50 27 Z" fill="#e07a22"/>
<path d="M36.5 6.25 L55.2 6.25 L55.5 12 L51 18 L43 19 L37.5 13 Z" fill="#c98a66"/><path d="M29 6.25 L37 6.25 L37.5 12 L35 15 L33 20.8 L29 19 Z" fill="#161616"/><path d="M55 6.25 L64.6 6.25 L64.6 13.5 L58 12.5 L54.8 12 Z" fill="#161616"/>
<path d="M17.7 27 L30 21 L36 45 L39 54 L53 17 L62.5 15.6 C66 20 68.75 24 68.75 30 C69.3 50 69.8 75 69.8 95.8 L41.7 108.3 L18.75 103 C17.5 90 16.7 75 16.7 62.5 C16.7 50 17 38 17.7 27 Z" fill="#3a3b3e"/>
<path d="M17.7 27 L30 21 L36 45 L39 54 L53 17 L62.5 15.6 C66 20 68.75 24 68.75 30 C69.3 50 69.8 75 69.8 95.8 L41.7 108.3 L18.75 103 C17.5 90 16.7 75 16.7 62.5 C16.7 50 17 38 17.7 27 Z" fill="url(#vsh)"/>
<circle cx="21.9" cy="31.25" r="2.2" fill="#30c8e8"/><circle cx="29.2" cy="35.4" r="3" fill="#3a8ef0"/><circle cx="19.8" cy="38.5" r="2" fill="#e83030"/><circle cx="25" cy="51.7" r="2.5" fill="#f040b8"/><circle cx="19.8" cy="57.3" r="2" fill="#f0f0f0"/><circle cx="26" cy="61.5" r="3" fill="#b8c0c8"/><circle cx="37.5" cy="53" r="4.2" fill="#f0a020"/><circle cx="48" cy="50" r="3" fill="#f8e030"/><circle cx="57.3" cy="49.6" r="3" fill="#40e0c8"/><circle cx="58.3" cy="25" r="2.5" fill="#e0a040"/><circle cx="37.5" cy="61.5" r="3" fill="#f0a838"/><circle cx="43.75" cy="62.5" r="3" fill="#6aa8c8"/><circle cx="51" cy="58.3" r="2.5" fill="#d8a060"/><circle cx="22.9" cy="76" r="2" fill="#ff50b0"/><circle cx="29" cy="74" r="1.4" fill="#e0e0e0"/><circle cx="51" cy="78" r="2.5" fill="#ff40c0"/><circle cx="55.2" cy="81.25" r="3" fill="#ffb020"/><circle cx="58.3" cy="71.9" r="2.2" fill="#50c040"/><circle cx="35.4" cy="85.4" r="2" fill="#f0f0f0"/><circle cx="37.5" cy="91.7" r="2.5" fill="#5090f0"/><circle cx="44.8" cy="88.5" r="3" fill="#30e070"/><circle cx="51" cy="94.8" r="5" fill="#e4e4ea"/><circle cx="38" cy="45" r="1.8" fill="#30c060"/><circle cx="30" cy="92" r="1.5" fill="#3060c0"/><circle cx="21" cy="70" r="1.5" fill="#ffd030"/>
<path d="M46 25 L55 23 L50.5 31 Z" fill="#d8f4f0"/><path d="M50.5 31 L50.5 37 M48 37 L53 37" stroke="#e0f0f0" stroke-width="0.9"/>
<rect x="42.7" y="41" width="11.3" height="3.8" fill="#ecdcdc"/><rect x="44.5" y="42" width="7" height="1.8" fill="#c03030"/>
<path d="M23 88.5 L26 82 L29 88.5 Z" fill="#f0e020"/>
<path d="M38 79 L45 74.5 L43 81 Z" fill="#e89050"/>
<path d="M19 46 L25 42 L26 45.5 L20 49 Z" fill="#28b878"/>
</svg><svg class="ic" width="27" height="27" viewBox="0 0 27 27"><use href="#icon"/></svg></div><div class="cell sel" style="left:206px;top:270px"><svg class="th" width="100" height="150" viewBox="0 0 100 150">
<defs><clipPath id="s5"><path d="M62 15.6 C70 15.8 77 17.5 81 22 C84.2 26 85.2 35 85.4 48 L85.4 67 L68.5 69.8 C69 50 69 35 68.75 27 Z"/></clipPath>
<clipPath id="u5"><path d="M16 95 L70 86 L71 114 C66 119 50 121 40 121 C30 121 22 120 16 116 Z"/></clipPath>
<clipPath id="l5"><path d="M18.5 27 C15 33 13.5 50 13.5 67 L18.5 68 Z"/></clipPath></defs>
<path d="M13.5 66 L19.8 66 C17.5 95 15 110 13.5 129 L6.25 129 C8 105 11 85 13.5 66 Z" fill="url(#skL)"/>
<path d="M69.5 66 L85.4 66 C85 90 84 110 84.4 129 L71.9 129 C71.5 110 70.5 90 69.5 66 Z" fill="url(#skR)"/>
<g clip-path="url(#s5)"><rect x="0" y="0" width="100" height="150" fill="#8a2a66"/><rect x="73.0" y="0" width="3.4" height="150" fill="#e8e2e0"/><rect x="81.0" y="0" width="3.4" height="150" fill="#e8e2e0"/><rect x="89.0" y="0" width="3.4" height="150" fill="#e8e2e0"/></g>
<path d="M68.5 62.5 L85.5 61.5 L85.5 68 L69 69.8 Z" fill="#e8e2e0"/>
<g clip-path="url(#l5)"><rect x="0" y="0" width="100" height="150" fill="#8a2a66"/><rect x="13.0" y="0" width="1.8" height="150" fill="#e8e2e0"/><rect x="17.0" y="0" width="1.8" height="150" fill="#e8e2e0"/></g>
<path d="M13.5 62 L18.5 62.5 L18.5 69 L13.5 68.5 Z" fill="#e8e2e0"/>
<g clip-path="url(#u5)"><rect x="0" y="0" width="100" height="150" fill="#e8e2e0"/><rect x="18.0" y="0" width="5.5" height="150" fill="#8a2a66"/><rect x="29.0" y="0" width="5.5" height="150" fill="#8a2a66"/><rect x="40.0" y="0" width="5.5" height="150" fill="#8a2a66"/><rect x="51.0" y="0" width="5.5" height="150" fill="#8a2a66"/><rect x="62.0" y="0" width="5.5" height="150" fill="#8a2a66"/></g>
<path d="M13.5 115 C25 119 35 120 41.7 120 C55 119.5 65 117.5 71.9 115.5 L71.9 129.2 L13.5 129.2 Z" fill="url(#jean2)"/>
<path d="M36 8 L58 8 L59 15 L48 30 L39.6 40 L34 18 Z" fill="url(#neck)"/>
<path d="M31 37 L40 37 L39 52 L34 48 Z" fill="#8a2a66"/>
<path d="M31 12.5 L36 10 L39.6 40 L34 41 L31 30 Z" fill="#ddd8d0"/>
<path d="M53 11 L62 13.5 L57 22 L50 27 Z" fill="#ddd8d0"/>
<path d="M36.5 6.25 L55.2 6.25 L55.5 12 L51 18 L43 19 L37.5 13 Z" fill="#c98a66"/><path d="M29 6.25 L37 6.25 L37.5 12 L35 15 L33 20.8 L29 19 Z" fill="#161616"/><path d="M55 6.25 L64.6 6.25 L64.6 13.5 L58 12.5 L54.8 12 Z" fill="#161616"/>
<path d="M17.7 27 L30 21 L36 45 L39 54 L53 17 L62.5 15.6 C66 20 68.75 24 68.75 30 C69.3 50 69.8 75 69.8 95.8 L41.7 108.3 L18.75 103 C17.5 90 16.7 75 16.7 62.5 C16.7 50 17 38 17.7 27 Z" fill="#2a2c34"/>
<path d="M17.7 27 L30 21 L36 45 L39 54 L53 17 L62.5 15.6 C66 20 68.75 24 68.75 30 C69.3 50 69.8 75 69.8 95.8 L41.7 108.3 L18.75 103 C17.5 90 16.7 75 16.7 62.5 C16.7 50 17 38 17.7 27 Z" fill="url(#vsh)"/>
<circle cx="21.9" cy="31.25" r="2.2" fill="#30c8e8"/><circle cx="29.2" cy="35.4" r="3" fill="#3a8ef0"/><circle cx="19.8" cy="38.5" r="2" fill="#e83030"/><circle cx="25" cy="51.7" r="2.5" fill="#f040b8"/><circle cx="19.8" cy="57.3" r="2" fill="#f0f0f0"/><circle cx="26" cy="61.5" r="3" fill="#b8c0c8"/><circle cx="37.5" cy="53" r="4.2" fill="#f0a020"/><circle cx="48" cy="50" r="3" fill="#f8e030"/><circle cx="57.3" cy="49.6" r="3" fill="#40e0c8"/><circle cx="58.3" cy="25" r="2.5" fill="#e0a040"/><circle cx="37.5" cy="61.5" r="3" fill="#f0a838"/><circle cx="43.75" cy="62.5" r="3" fill="#6aa8c8"/><circle cx="51" cy="58.3" r="2.5" fill="#d8a060"/><circle cx="22.9" cy="76" r="2" fill="#ff50b0"/><circle cx="29" cy="74" r="1.4" fill="#e0e0e0"/><circle cx="51" cy="78" r="2.5" fill="#ff40c0"/><circle cx="55.2" cy="81.25" r="3" fill="#ffb020"/><circle cx="58.3" cy="71.9" r="2.2" fill="#50c040"/><circle cx="35.4" cy="85.4" r="2" fill="#f0f0f0"/><circle cx="37.5" cy="91.7" r="2.5" fill="#5090f0"/><circle cx="44.8" cy="88.5" r="3" fill="#30e070"/><circle cx="51" cy="94.8" r="5" fill="#e4e4ea"/><circle cx="38" cy="45" r="1.8" fill="#30c060"/><circle cx="30" cy="92" r="1.5" fill="#3060c0"/><circle cx="21" cy="70" r="1.5" fill="#ffd030"/>
<path d="M46 25 L55 23 L50.5 31 Z" fill="#d8f4f0"/><path d="M50.5 31 L50.5 37 M48 37 L53 37" stroke="#e0f0f0" stroke-width="0.9"/>
<rect x="42.7" y="41" width="11.3" height="3.8" fill="#ecdcdc"/><rect x="44.5" y="42" width="7" height="1.8" fill="#c03030"/>
<path d="M23 88.5 L26 82 L29 88.5 Z" fill="#f0e020"/>
<path d="M38 79 L45 74.5 L43 81 Z" fill="#e89050"/>
<path d="M19 46 L25 42 L26 45.5 L20 49 Z" fill="#28b878"/>
</svg><svg class="ic" width="27" height="27" viewBox="0 0 27 27"><use href="#icon"/></svg></div><div class="cell sel" style="left:306px;top:270px"><svg class="th" width="100" height="150" viewBox="0 0 100 150">
<defs><clipPath id="s6"><path d="M62 15.6 C70 15.8 77 17.5 81 22 C84.2 26 85.2 35 85.4 48 L85.4 67 L68.5 69.8 C69 50 69 35 68.75 27 Z"/></clipPath>
<clipPath id="u6"><path d="M16 95 L70 86 L71 114 C66 119 50 121 40 121 C30 121 22 120 16 116 Z"/></clipPath>
<clipPath id="l6"><path d="M18.5 27 C15 33 13.5 50 13.5 67 L18.5 68 Z"/></clipPath></defs>
<path d="M13.5 66 L19.8 66 C17.5 95 15 110 13.5 129 L6.25 129 C8 105 11 85 13.5 66 Z" fill="url(#skL)"/>
<path d="M69.5 66 L85.4 66 C85 90 84 110 84.4 129 L71.9 129 C71.5 110 70.5 90 69.5 66 Z" fill="url(#skR)"/>
<g clip-path="url(#s6)"><rect x="0" y="0" width="100" height="150" fill="#2a9a8a"/><rect x="73.0" y="0" width="3.4" height="150" fill="#eadcb8"/><rect x="81.0" y="0" width="3.4" height="150" fill="#eadcb8"/><rect x="89.0" y="0" width="3.4" height="150" fill="#eadcb8"/></g>
<path d="M68.5 62.5 L85.5 61.5 L85.5 68 L69 69.8 Z" fill="#eadcb8"/>
<g clip-path="url(#l6)"><rect x="0" y="0" width="100" height="150" fill="#2a9a8a"/><rect x="13.0" y="0" width="1.8" height="150" fill="#eadcb8"/><rect x="17.0" y="0" width="1.8" height="150" fill="#eadcb8"/></g>
<path d="M13.5 62 L18.5 62.5 L18.5 69 L13.5 68.5 Z" fill="#eadcb8"/>
<g clip-path="url(#u6)"><rect x="0" y="0" width="100" height="150" fill="#eadcb8"/><rect x="18.0" y="0" width="5.5" height="150" fill="#2a9a8a"/><rect x="29.0" y="0" width="5.5" height="150" fill="#2a9a8a"/><rect x="40.0" y="0" width="5.5" height="150" fill="#2a9a8a"/><rect x="51.0" y="0" width="5.5" height="150" fill="#2a9a8a"/><rect x="62.0" y="0" width="5.5" height="150" fill="#2a9a8a"/></g>
<path d="M13.5 115 C25 119 35 120 41.7 120 C55 119.5 65 117.5 71.9 115.5 L71.9 129.2 L13.5 129.2 Z" fill="url(#jean2)"/>
<path d="M36 8 L58 8 L59 15 L48 30 L39.6 40 L34 18 Z" fill="url(#neck)"/>
<path d="M31 37 L40 37 L39 52 L34 48 Z" fill="#2a9a8a"/>
<path d="M31 12.5 L36 10 L39.6 40 L34 41 L31 30 Z" fill="#eadcb8"/>
<path d="M53 11 L62 13.5 L57 22 L50 27 Z" fill="#eadcb8"/>
<path d="M36.5 6.25 L55.2 6.25 L55.5 12 L51 18 L43 19 L37.5 13 Z" fill="#c98a66"/><path d="M29 6.25 L37 6.25 L37.5 12 L35 15 L33 20.8 L29 19 Z" fill="#161616"/><path d="M55 6.25 L64.6 6.25 L64.6 13.5 L58 12.5 L54.8 12 Z" fill="#161616"/>
<path d="M17.7 27 L30 21 L36 45 L39 54 L53 17 L62.5 15.6 C66 20 68.75 24 68.75 30 C69.3 50 69.8 75 69.8 95.8 L41.7 108.3 L18.75 103 C17.5 90 16.7 75 16.7 62.5 C16.7 50 17 38 17.7 27 Z" fill="#262a32"/>
<path d="M17.7 27 L30 21 L36 45 L39 54 L53 17 L62.5 15.6 C66 20 68.75 24 68.75 30 C69.3 50 69.8 75 69.8 95.8 L41.7 108.3 L18.75 103 C17.5 90 16.7 75 16.7 62.5 C16.7 50 17 38 17.7 27 Z" fill="url(#vsh)"/>
<circle cx="21.9" cy="31.25" r="2.2" fill="#30c8e8"/><circle cx="29.2" cy="35.4" r="3" fill="#3a8ef0"/><circle cx="19.8" cy="38.5" r="2" fill="#e83030"/><circle cx="25" cy="51.7" r="2.5" fill="#f040b8"/><circle cx="19.8" cy="57.3" r="2" fill="#f0f0f0"/><circle cx="26" cy="61.5" r="3" fill="#b8c0c8"/><circle cx="37.5" cy="53" r="4.2" fill="#f0a020"/><circle cx="48" cy="50" r="3" fill="#f8e030"/><circle cx="57.3" cy="49.6" r="3" fill="#40e0c8"/><circle cx="58.3" cy="25" r="2.5" fill="#e0a040"/><circle cx="37.5" cy="61.5" r="3" fill="#f0a838"/><circle cx="43.75" cy="62.5" r="3" fill="#6aa8c8"/><circle cx="51" cy="58.3" r="2.5" fill="#d8a060"/><circle cx="22.9" cy="76" r="2" fill="#ff50b0"/><circle cx="29" cy="74" r="1.4" fill="#e0e0e0"/><circle cx="51" cy="78" r="2.5" fill="#ff40c0"/><circle cx="55.2" cy="81.25" r="3" fill="#ffb020"/><circle cx="58.3" cy="71.9" r="2.2" fill="#50c040"/><circle cx="35.4" cy="85.4" r="2" fill="#f0f0f0"/><circle cx="37.5" cy="91.7" r="2.5" fill="#5090f0"/><circle cx="44.8" cy="88.5" r="3" fill="#30e070"/><circle cx="51" cy="94.8" r="5" fill="#e4e4ea"/><circle cx="38" cy="45" r="1.8" fill="#30c060"/><circle cx="30" cy="92" r="1.5" fill="#3060c0"/><circle cx="21" cy="70" r="1.5" fill="#ffd030"/>
<path d="M46 25 L55 23 L50.5 31 Z" fill="#d8f4f0"/><path d="M50.5 31 L50.5 37 M48 37 L53 37" stroke="#e0f0f0" stroke-width="0.9"/>
<rect x="42.7" y="41" width="11.3" height="3.8" fill="#ecdcdc"/><rect x="44.5" y="42" width="7" height="1.8" fill="#c03030"/>
<path d="M23 88.5 L26 82 L29 88.5 Z" fill="#f0e020"/>
<path d="M38 79 L45 74.5 L43 81 Z" fill="#e89050"/>
<path d="M19 46 L25 42 L26 45.5 L20 49 Z" fill="#28b878"/>
</svg><svg class="ic" width="27" height="27" viewBox="0 0 27 27"><use href="#icon"/></svg></div><div class="cell sel" style="left:406px;top:270px"><svg class="th" width="100" height="150" viewBox="0 0 100 150">
<defs><clipPath id="s7"><path d="M62 15.6 C70 15.8 77 17.5 81 22 C84.2 26 85.2 35 85.4 48 L85.4 67 L68.5 69.8 C69 50 69 35 68.75 27 Z"/></clipPath>
<clipPath id="u7"><path d="M16 95 L70 86 L71 114 C66 119 50 121 40 121 C30 121 22 120 16 116 Z"/></clipPath>
<clipPath id="l7"><path d="M18.5 27 C15 33 13.5 50 13.5 67 L18.5 68 Z"/></clipPath></defs>
<path d="M13.5 66 L19.8 66 C17.5 95 15 110 13.5 129 L6.25 129 C8 105 11 85 13.5 66 Z" fill="url(#skL)"/>
<path d="M69.5 66 L85.4 66 C85 90 84 110 84.4 129 L71.9 129 C71.5 110 70.5 90 69.5 66 Z" fill="url(#skR)"/>
<g clip-path="url(#s7)"><rect x="0" y="0" width="100" height="150" fill="#e8c020"/><rect x="73.0" y="0" width="3.4" height="150" fill="#22307c"/><rect x="81.0" y="0" width="3.4" height="150" fill="#22307c"/><rect x="89.0" y="0" width="3.4" height="150" fill="#22307c"/></g>
<path d="M68.5 62.5 L85.5 61.5 L85.5 68 L69 69.8 Z" fill="#22307c"/>
<g clip-path="url(#l7)"><rect x="0" y="0" width="100" height="150" fill="#e8c020"/><rect x="13.0" y="0" width="1.8" height="150" fill="#22307c"/><rect x="17.0" y="0" width="1.8" height="150" fill="#22307c"/></g>
<path d="M13.5 62 L18.5 62.5 L18.5 69 L13.5 68.5 Z" fill="#22307c"/>
<g clip-path="url(#u7)"><rect x="0" y="0" width="100" height="150" fill="#22307c"/><rect x="18.0" y="0" width="5.5" height="150" fill="#e8c020"/><rect x="29.0" y="0" width="5.5" height="150" fill="#e8c020"/><rect x="40.0" y="0" width="5.5" height="150" fill="#e8c020"/><rect x="51.0" y="0" width="5.5" height="150" fill="#e8c020"/><rect x="62.0" y="0" width="5.5" height="150" fill="#e8c020"/></g>
<path d="M13.5 115 C25 119 35 120 41.7 120 C55 119.5 65 117.5 71.9 115.5 L71.9 129.2 L13.5 129.2 Z" fill="url(#jean2)"/>
<path d="M36 8 L58 8 L59 15 L48 30 L39.6 40 L34 18 Z" fill="url(#neck)"/>
<path d="M31 37 L40 37 L39 52 L34 48 Z" fill="#e8c020"/>
<path d="M31 12.5 L36 10 L39.6 40 L34 41 L31 30 Z" fill="#22307c"/>
<path d="M53 11 L62 13.5 L57 22 L50 27 Z" fill="#22307c"/>
<path d="M36.5 6.25 L55.2 6.25 L55.5 12 L51 18 L43 19 L37.5 13 Z" fill="#c98a66"/><path d="M29 6.25 L37 6.25 L37.5 12 L35 15 L33 20.8 L29 19 Z" fill="#161616"/><path d="M55 6.25 L64.6 6.25 L64.6 13.5 L58 12.5 L54.8 12 Z" fill="#161616"/>
<path d="M17.7 27 L30 21 L36 45 L39 54 L53 17 L62.5 15.6 C66 20 68.75 24 68.75 30 C69.3 50 69.8 75 69.8 95.8 L41.7 108.3 L18.75 103 C17.5 90 16.7 75 16.7 62.5 C16.7 50 17 38 17.7 27 Z" fill="#2e3036"/>
<path d="M17.7 27 L30 21 L36 45 L39 54 L53 17 L62.5 15.6 C66 20 68.75 24 68.75 30 C69.3 50 69.8 75 69.8 95.8 L41.7 108.3 L18.75 103 C17.5 90 16.7 75 16.7 62.5 C16.7 50 17 38 17.7 27 Z" fill="url(#vsh)"/>
<circle cx="21.9" cy="31.25" r="2.2" fill="#30c8e8"/><circle cx="29.2" cy="35.4" r="3" fill="#3a8ef0"/><circle cx="19.8" cy="38.5" r="2" fill="#e83030"/><circle cx="25" cy="51.7" r="2.5" fill="#f040b8"/><circle cx="19.8" cy="57.3" r="2" fill="#f0f0f0"/><circle cx="26" cy="61.5" r="3" fill="#b8c0c8"/><circle cx="37.5" cy="53" r="4.2" fill="#f0a020"/><circle cx="48" cy="50" r="3" fill="#f8e030"/><circle cx="57.3" cy="49.6" r="3" fill="#40e0c8"/><circle cx="58.3" cy="25" r="2.5" fill="#e0a040"/><circle cx="37.5" cy="61.5" r="3" fill="#f0a838"/><circle cx="43.75" cy="62.5" r="3" fill="#6aa8c8"/><circle cx="51" cy="58.3" r="2.5" fill="#d8a060"/><circle cx="22.9" cy="76" r="2" fill="#ff50b0"/><circle cx="29" cy="74" r="1.4" fill="#e0e0e0"/><circle cx="51" cy="78" r="2.5" fill="#ff40c0"/><circle cx="55.2" cy="81.25" r="3" fill="#ffb020"/><circle cx="58.3" cy="71.9" r="2.2" fill="#50c040"/><circle cx="35.4" cy="85.4" r="2" fill="#f0f0f0"/><circle cx="37.5" cy="91.7" r="2.5" fill="#5090f0"/><circle cx="44.8" cy="88.5" r="3" fill="#30e070"/><circle cx="51" cy="94.8" r="5" fill="#e4e4ea"/><circle cx="38" cy="45" r="1.8" fill="#30c060"/><circle cx="30" cy="92" r="1.5" fill="#3060c0"/><circle cx="21" cy="70" r="1.5" fill="#ffd030"/>
<path d="M46 25 L55 23 L50.5 31 Z" fill="#d8f4f0"/><path d="M50.5 31 L50.5 37 M48 37 L53 37" stroke="#e0f0f0" stroke-width="0.9"/>
<rect x="42.7" y="41" width="11.3" height="3.8" fill="#ecdcdc"/><rect x="44.5" y="42" width="7" height="1.8" fill="#c03030"/>
<path d="M23 88.5 L26 82 L29 88.5 Z" fill="#f0e020"/>
<path d="M38 79 L45 74.5 L43 81 Z" fill="#e89050"/>
<path d="M19 46 L25 42 L26 45.5 L20 49 Z" fill="#28b878"/>
</svg><svg class="ic" width="27" height="27" viewBox="0 0 27 27"><use href="#icon"/></svg></div><div class="cell sel" style="left:506px;top:270px"><svg class="th" width="100" height="150" viewBox="0 0 100 150">
<defs><clipPath id="s8"><path d="M62 15.6 C70 15.8 77 17.5 81 22 C84.2 26 85.2 35 85.4 48 L85.4 67 L68.5 69.8 C69 50 69 35 68.75 27 Z"/></clipPath>
<clipPath id="u8"><path d="M16 95 L70 86 L71 114 C66 119 50 121 40 121 C30 121 22 120 16 116 Z"/></clipPath>
<clipPath id="l8"><path d="M18.5 27 C15 33 13.5 50 13.5 67 L18.5 68 Z"/></clipPath></defs>
<path d="M13.5 66 L19.8 66 C17.5 95 15 110 13.5 129 L6.25 129 C8 105 11 85 13.5 66 Z" fill="url(#skL)"/>
<path d="M69.5 66 L85.4 66 C85 90 84 110 84.4 129 L71.9 129 C71.5 110 70.5 90 69.5 66 Z" fill="url(#skR)"/>
<g clip-path="url(#s8)"><rect x="0" y="0" width="100" height="150" fill="#a81c22"/><rect x="73.0" y="0" width="3.4" height="150" fill="#f2f2f2"/><rect x="81.0" y="0" width="3.4" height="150" fill="#f2f2f2"/><rect x="89.0" y="0" width="3.4" height="150" fill="#f2f2f2"/></g>
<path d="M68.5 62.5 L85.5 61.5 L85.5 68 L69 69.8 Z" fill="#f2f2f2"/>
<g clip-path="url(#l8)"><rect x="0" y="0" width="100" height="150" fill="#a81c22"/><rect x="13.0" y="0" width="1.8" height="150" fill="#f2f2f2"/><rect x="17.0" y="0" width="1.8" height="150" fill="#f2f2f2"/></g>
<path d="M13.5 62 L18.5 62.5 L18.5 69 L13.5 68.5 Z" fill="#f2f2f2"/>
<g clip-path="url(#u8)"><rect x="0" y="0" width="100" height="150" fill="#f2f2f2"/><rect x="18.0" y="0" width="5.5" height="150" fill="#a81c22"/><rect x="29.0" y="0" width="5.5" height="150" fill="#a81c22"/><rect x="40.0" y="0" width="5.5" height="150" fill="#a81c22"/><rect x="51.0" y="0" width="5.5" height="150" fill="#a81c22"/><rect x="62.0" y="0" width="5.5" height="150" fill="#a81c22"/></g>
<path d="M13.5 115 C25 119 35 120 41.7 120 C55 119.5 65 117.5 71.9 115.5 L71.9 129.2 L13.5 129.2 Z" fill="url(#jean2)"/>
<path d="M36 8 L58 8 L59 15 L48 30 L39.6 40 L34 18 Z" fill="url(#neck)"/>
<path d="M31 37 L40 37 L39 52 L34 48 Z" fill="#a81c22"/>
<path d="M31 12.5 L36 10 L39.6 40 L34 41 L31 30 Z" fill="#f2f2f2"/>
<path d="M53 11 L62 13.5 L57 22 L50 27 Z" fill="#f2f2f2"/>
<path d="M36.5 6.25 L55.2 6.25 L55.5 12 L51 18 L43 19 L37.5 13 Z" fill="#c98a66"/><path d="M29 6.25 L37 6.25 L37.5 12 L35 15 L33 20.8 L29 19 Z" fill="#161616"/><path d="M55 6.25 L64.6 6.25 L64.6 13.5 L58 12.5 L54.8 12 Z" fill="#161616"/>
<path d="M17.7 27 L30 21 L36 45 L39 54 L53 17 L62.5 15.6 C66 20 68.75 24 68.75 30 C69.3 50 69.8 75 69.8 95.8 L41.7 108.3 L18.75 103 C17.5 90 16.7 75 16.7 62.5 C16.7 50 17 38 17.7 27 Z" fill="#2a2c34"/>
<path d="M17.7 27 L30 21 L36 45 L39 54 L53 17 L62.5 15.6 C66 20 68.75 24 68.75 30 C69.3 50 69.8 75 69.8 95.8 L41.7 108.3 L18.75 103 C17.5 90 16.7 75 16.7 62.5 C16.7 50 17 38 17.7 27 Z" fill="url(#vsh)"/>
<circle cx="21.9" cy="31.25" r="2.2" fill="#30c8e8"/><circle cx="29.2" cy="35.4" r="3" fill="#3a8ef0"/><circle cx="19.8" cy="38.5" r="2" fill="#e83030"/><circle cx="25" cy="51.7" r="2.5" fill="#f040b8"/><circle cx="19.8" cy="57.3" r="2" fill="#f0f0f0"/><circle cx="26" cy="61.5" r="3" fill="#b8c0c8"/><circle cx="37.5" cy="53" r="4.2" fill="#f0a020"/><circle cx="48" cy="50" r="3" fill="#f8e030"/><circle cx="57.3" cy="49.6" r="3" fill="#40e0c8"/><circle cx="58.3" cy="25" r="2.5" fill="#e0a040"/><circle cx="37.5" cy="61.5" r="3" fill="#f0a838"/><circle cx="43.75" cy="62.5" r="3" fill="#6aa8c8"/><circle cx="51" cy="58.3" r="2.5" fill="#d8a060"/><circle cx="22.9" cy="76" r="2" fill="#ff50b0"/><circle cx="29" cy="74" r="1.4" fill="#e0e0e0"/><circle cx="51" cy="78" r="2.5" fill="#ff40c0"/><circle cx="55.2" cy="81.25" r="3" fill="#ffb020"/><circle cx="58.3" cy="71.9" r="2.2" fill="#50c040"/><circle cx="35.4" cy="85.4" r="2" fill="#f0f0f0"/><circle cx="37.5" cy="91.7" r="2.5" fill="#5090f0"/><circle cx="44.8" cy="88.5" r="3" fill="#30e070"/><circle cx="51" cy="94.8" r="5" fill="#e4e4ea"/><circle cx="38" cy="45" r="1.8" fill="#30c060"/><circle cx="30" cy="92" r="1.5" fill="#3060c0"/><circle cx="21" cy="70" r="1.5" fill="#ffd030"/>
<path d="M46 25 L55 23 L50.5 31 Z" fill="#d8f4f0"/><path d="M50.5 31 L50.5 37 M48 37 L53 37" stroke="#e0f0f0" stroke-width="0.9"/>
<rect x="42.7" y="41" width="11.3" height="3.8" fill="#ecdcdc"/><rect x="44.5" y="42" width="7" height="1.8" fill="#c03030"/>
<path d="M23 88.5 L26 82 L29 88.5 Z" fill="#f0e020"/>
<path d="M38 79 L45 74.5 L43 81 Z" fill="#e89050"/>
<path d="M19 46 L25 42 L26 45.5 L20 49 Z" fill="#28b878"/>
</svg><svg class="ic" width="27" height="27" viewBox="0 0 27 27"><use href="#icon"/></svg></div><div style="position:absolute;left:908px;top:122px;width:94px;height:145px;border:1px dotted #4a4a4a"></div><div style="position:absolute;left:0;top:653px;width:1280px;height:33px;background:#f0f0f0"></div><div style="position:absolute;left:1146px;top:662px;width:47px;height:15px;border:1px solid #adadad;background:#e1e1e1"></div><div class="t" style="left:1157px;top:665.34px;font-size:11px;letter-spacing:-0.75px;color:#111;">Далее</div><div style="position:absolute;left:0;top:687px;width:1280px;height:33px;background:#23272e;border-top:1px solid #0e1014;box-sizing:border-box"></div><div style="position:absolute;left:0;top:685px;width:1280px;height:1px;background:#fafafa"></div><div style="position:absolute;left:0;top:686px;width:1280px;height:1px;background:#d8d8d8"></div><svg style="position:absolute;left:12px;top:695px" width="16" height="16" viewBox="0 0 16 16"><path d="M1 2.6 L6.9 1.8 V7.4 H1 Z M7.8 1.7 L15 0.7 V7.4 H7.8 Z M1 8.3 H6.9 V14 L1 13.2 Z M7.8 8.3 H15 V15 L7.8 14 Z" fill="#fff"/></svg><div style="position:absolute;left:40px;top:687px;width:286px;height:33px;background:#f0f0f0;border-top:1px solid #fafafa;border-left:1px solid #fafafa;box-sizing:border-box"></div><svg style="position:absolute;left:49px;top:696px" width="16" height="15" viewBox="0 0 16 15"><circle cx="10" cy="5.5" r="4.6" fill="none" stroke="#222" stroke-width="1.2"/><path d="M6.6 8.9 L1.3 14" stroke="#222" stroke-width="1.3"/></svg><div class="t" style="left:73.5px;top:697.89px;font-size:12.5px;letter-spacing:-0.14px;color:#3a3a3a;">Введите здесь текст для поиска</div><div style="position:absolute;left:587px;top:687px;width:40px;height:33px;background:#45484f"></div><div style="position:absolute;left:466px;top:718px;width:34px;height:2px;background:#a6c8f0"></div><div style="position:absolute;left:507px;top:718px;width:34px;height:2px;background:#a6c8f0"></div><div style="position:absolute;left:587px;top:718px;width:40px;height:2px;background:#a6c8f0"></div><div style="position:absolute;left:631px;top:718px;width:35px;height:2px;background:#a6c8f0"></div><div style="position:absolute;left:493px;top:718px;width:7px;height:2px;background:#7f96b8"></div><svg style="position:absolute;left:342px;top:692px" width="22" height="22" viewBox="0 0 22 22"><defs><linearGradient id="al" x1="0" x2="1" y1="0" y2="1"><stop offset="0" stop-color="#7a5cf5"/><stop offset="1" stop-color="#c050e8"/></linearGradient></defs><circle cx="11" cy="11" r="10.4" fill="url(#al)"/><path d="M11 5.5 C13 5.5 16.2 12.5 15.6 14.5 C15 16 7 16 6.4 14.5 C5.8 12.5 9 5.5 11 5.5Z" fill="#fff"/></svg><svg style="position:absolute;left:391px;top:693px" width="18" height="21" viewBox="0 0 18 21"><defs><linearGradient id="of" x1="0" x2="1" y1="0" y2="0"><stop offset="0" stop-color="#d4203c"/><stop offset="0.6" stop-color="#e33a20"/><stop offset="1" stop-color="#f07010"/></linearGradient></defs><path d="M1 4.5 L11 0.5 L17 2.5 V18 L11 20.5 L1 17 L11 18 V4.5 L5 6.3 V15 L1 16.5 Z" fill="url(#of)"/></svg><svg style="position:absolute;left:431px;top:694px" width="22" height="20" viewBox="0 0 22 20"><path d="M0.5 7 L11 0.5 L21.5 7 V19 H0.5 Z" fill="#1a78d0"/><path d="M0.5 7 H21.5 L11 13 Z" fill="#e8eef4"/><path d="M0.5 8 L11 14 L21.5 8 V19 H0.5 Z" fill="#30b0f0"/><path d="M0.5 19 L11 11.5 L21.5 19 Z" fill="#4cc4f8"/></svg><svg style="position:absolute;left:473px;top:695px" width="19" height="16" viewBox="0 0 19 16"><path d="M0.5 1 H7 L8.5 2.5 H18.5 V15 H0.5 Z" fill="#e8b020"/><path d="M0.5 4 H18.5 V15 H0.5 Z" fill="#f8d048"/><path d="M5 9.5 H14 V15.5 H12 V11.5 H7 V15.5 H5 Z" fill="#3a8ae0"/></svg><svg style="position:absolute;left:513px;top:692px" width="22" height="22" viewBox="0 0 22 22"><circle cx="11" cy="11" r="10.3" fill="#f2f2f2"/><path d="M6.5 5 L11 11.5 L15.5 5 M11 11.5 V18" stroke="#e01010" stroke-width="2" fill="none"/></svg><svg style="position:absolute;left:555px;top:693px" width="20" height="20" viewBox="0 0 20 20"><circle cx="10" cy="10" r="9.5" fill="#e33b2e"/><path d="M10 10 L18.2 5.3 A9.5 9.5 0 0 1 10 19.5 Z" fill="#fbc02d"/><path d="M10 10 L10 19.5 A9.5 9.5 0 0 1 1.8 5.3 Z" fill="#2da94f"/><circle cx="10" cy="10" r="4.5" fill="#fff"/><circle cx="10" cy="10" r="3.5" fill="#4a8af4"/></svg><svg style="position:absolute;left:595px;top:693px" width="22" height="21" viewBox="0 0 22 21"><path d="M10.5 0.5 L13 10 L10.5 19.5 L8 10 Z" fill="#48b048"/><g font-family="Liberation Sans" font-weight="bold" stroke="#1a3050" stroke-width="0.6" paint-order="stroke"><text x="1" y="16.5" font-size="12" fill="#2f88e8">s</text><text x="16.5" y="12.5" font-size="11" fill="#38a0f0" text-anchor="middle">S</text><text x="10.8" y="14.5" font-size="11" fill="#fff" text-anchor="middle">4</text></g></svg><svg style="position:absolute;left:637px;top:693px" width="22" height="19" viewBox="0 0 22 19"><g stroke="#f5870f" stroke-linecap="round" fill="none"><path d="M2 15.5 L9.5 9.5" stroke-width="2.4"/><path d="M5 7 L12 7" stroke-width="2.4"/><path d="M10.5 2.2 L14.5 5.5" stroke-width="2.4"/></g><circle cx="13.5" cy="10" r="6.4" fill="#f5870f"/><circle cx="13.6" cy="9.9" r="3.7" fill="#fff"/><circle cx="13.7" cy="9.9" r="2.1" fill="#1b4e96"/></svg><svg style="position:absolute;left:1047px;top:695px" width="19" height="19" viewBox="0 0 19 19"><circle cx="9.3" cy="9.3" r="8.6" fill="#1e90e0" stroke="#fff" stroke-width="1.4"/><path d="M6.6 7.3 C6.6 4.2 12 4.2 12 7.2 C12 9.2 9.4 9.4 9.4 11.6" stroke="#fff" stroke-width="1.7" fill="none"/><circle cx="9.4" cy="14.2" r="1.1" fill="#fff"/></svg><svg style="position:absolute;left:1073px;top:700px" width="12" height="7" viewBox="0 0 12 7"><path d="M0.7 6.3 L6 1 L11.3 6.3" stroke="#fff" stroke-width="1.1" fill="none"/></svg><svg style="position:absolute;left:1092px;top:699px" width="14" height="9" viewBox="0 0 14 9"><rect x="2.5" y="1.5" width="10.5" height="7" fill="#eee"/><rect x="0.5" y="0.5" width="2" height="3" fill="#eee"/></svg><svg style="position:absolute;left:1113px;top:698px" width="12" height="11" viewBox="0 0 12 11"><g fill="none" stroke="#ddd" stroke-width="1"><path d="M0.8 10.5 A10 10 0 0 1 11 0.8"/><path d="M3.3 10.5 A7.5 7.5 0 0 1 11 3.3"/><path d="M5.8 10.5 A5 5 0 0 1 11 5.8"/></g><circle cx="10" cy="9.8" r="1" fill="#fff"/></svg><svg style="position:absolute;left:1131px;top:698px" width="15" height="11" viewBox="0 0 15 11"><path d="M0.5 3.5 H3 L6.5 0.7 V10.3 L3 7.5 H0.5 Z" fill="none" stroke="#eee" stroke-width="0.9"/><path d="M8.5 3.2 A3 3 0 0 1 8.5 7.8 M10.8 1.5 A5.5 5.5 0 0 1 10.8 9.5" fill="none" stroke="#eee" stroke-width="0.9"/><path d="M13 0.5 A8 8 0 0 1 13 10.5" fill="none" stroke="#888" stroke-width="0.9"/></svg><div class="t" style="left:1154.5px;top:699.05px;font-size:10px;letter-spacing:-0.75px;color:#fff;">РУС</div><div class="t" style="left:1195.5px;top:690.80px;font-size:10.5px;letter-spacing:-0.6px;color:#fff;">16:31</div><div class="t" style="left:1184.3px;top:706.10px;font-size:10.5px;letter-spacing:-0.57px;color:#fff;">30.03.2022</div><svg style="position:absolute;left:1245px;top:696px" width="16" height="15" viewBox="0 0 16 15"><path d="M0.6 0.6 H15.2 V10.4 H10 L8 13.8 L6 10.4 H0.6 Z" fill="none" stroke="#eee" stroke-width="1"/></svg><div style="position:absolute;left:1275px;top:687px;width:1px;height:33px;background:#5a5d63"></div>
</body></html>
